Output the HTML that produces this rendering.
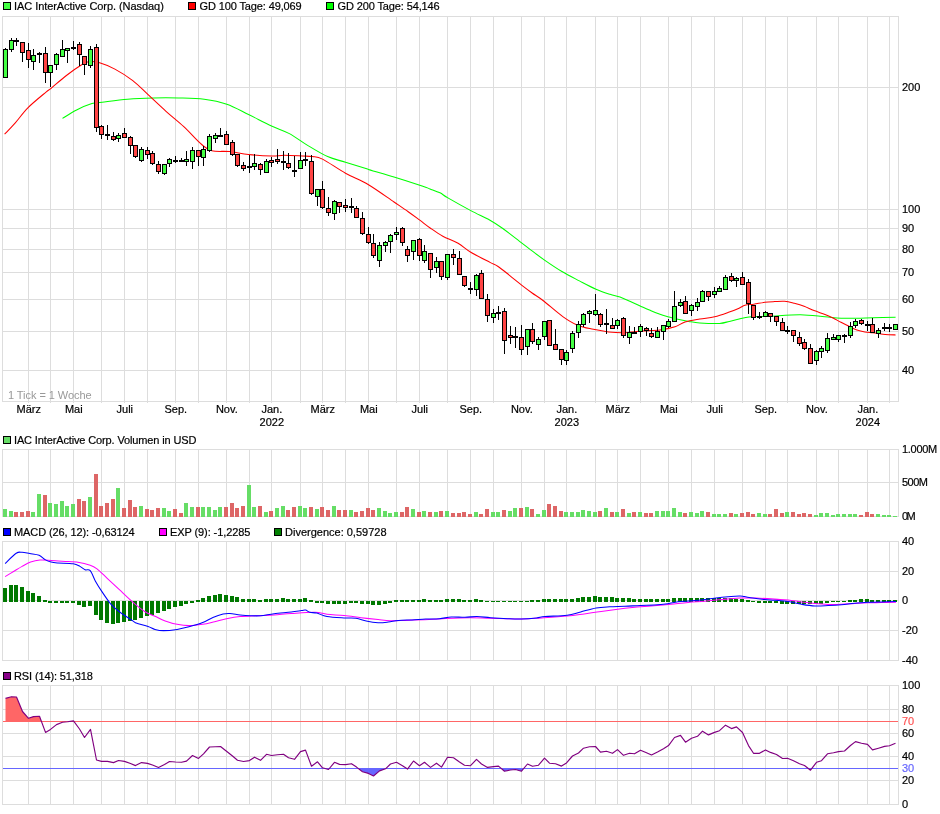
<!DOCTYPE html>
<html><head><meta charset="utf-8"><style>
html,body{margin:0;padding:0;background:#fff;width:940px;height:814px;overflow:hidden}
svg{display:block;will-change:transform}
text{font-family:"Liberation Sans",sans-serif;font-size:11px;stroke:currentColor;stroke-width:0.2px}
</style></head><body>
<svg width="940" height="814" viewBox="0 0 940 814" shape-rendering="crispEdges">
<rect x="28" y="16" width="1" height="387" fill="#dddddd"/>
<rect x="50" y="16" width="1" height="387" fill="#dddddd"/>
<rect x="73" y="16" width="1" height="387" fill="#dddddd"/>
<rect x="101" y="16" width="1" height="387" fill="#dddddd"/>
<rect x="124" y="16" width="1" height="387" fill="#dddddd"/>
<rect x="147" y="16" width="1" height="387" fill="#dddddd"/>
<rect x="175" y="16" width="1" height="387" fill="#dddddd"/>
<rect x="198" y="16" width="1" height="387" fill="#dddddd"/>
<rect x="226" y="16" width="1" height="387" fill="#dddddd"/>
<rect x="249" y="16" width="1" height="387" fill="#dddddd"/>
<rect x="271" y="16" width="1" height="387" fill="#dddddd"/>
<rect x="300" y="16" width="1" height="387" fill="#dddddd"/>
<rect x="322" y="16" width="1" height="387" fill="#dddddd"/>
<rect x="345" y="16" width="1" height="387" fill="#dddddd"/>
<rect x="368" y="16" width="1" height="387" fill="#dddddd"/>
<rect x="396" y="16" width="1" height="387" fill="#dddddd"/>
<rect x="419" y="16" width="1" height="387" fill="#dddddd"/>
<rect x="447" y="16" width="1" height="387" fill="#dddddd"/>
<rect x="470" y="16" width="1" height="387" fill="#dddddd"/>
<rect x="493" y="16" width="1" height="387" fill="#dddddd"/>
<rect x="521" y="16" width="1" height="387" fill="#dddddd"/>
<rect x="544" y="16" width="1" height="387" fill="#dddddd"/>
<rect x="566" y="16" width="1" height="387" fill="#dddddd"/>
<rect x="595" y="16" width="1" height="387" fill="#dddddd"/>
<rect x="617" y="16" width="1" height="387" fill="#dddddd"/>
<rect x="640" y="16" width="1" height="387" fill="#dddddd"/>
<rect x="668" y="16" width="1" height="387" fill="#dddddd"/>
<rect x="691" y="16" width="1" height="387" fill="#dddddd"/>
<rect x="714" y="16" width="1" height="387" fill="#dddddd"/>
<rect x="742" y="16" width="1" height="387" fill="#dddddd"/>
<rect x="765" y="16" width="1" height="387" fill="#dddddd"/>
<rect x="787" y="16" width="1" height="387" fill="#dddddd"/>
<rect x="816" y="16" width="1" height="387" fill="#dddddd"/>
<rect x="838" y="16" width="1" height="387" fill="#dddddd"/>
<rect x="867" y="16" width="1" height="387" fill="#dddddd"/>
<rect x="889" y="16" width="1" height="387" fill="#dddddd"/>
<rect x="2" y="87" width="897" height="1" fill="#dddddd"/>
<text x="902" y="91" text-anchor="start" fill="#000" style="color:#000">200</text>
<rect x="2" y="209" width="897" height="1" fill="#dddddd"/>
<text x="902" y="213" text-anchor="start" fill="#000" style="color:#000">100</text>
<rect x="2" y="228" width="897" height="1" fill="#dddddd"/>
<text x="902" y="232" text-anchor="start" fill="#000" style="color:#000">90</text>
<rect x="2" y="249" width="897" height="1" fill="#dddddd"/>
<text x="902" y="253" text-anchor="start" fill="#000" style="color:#000">80</text>
<rect x="2" y="272" width="897" height="1" fill="#dddddd"/>
<text x="902" y="276" text-anchor="start" fill="#000" style="color:#000">70</text>
<rect x="2" y="299" width="897" height="1" fill="#dddddd"/>
<text x="902" y="303" text-anchor="start" fill="#000" style="color:#000">60</text>
<rect x="2" y="331" width="897" height="1" fill="#dddddd"/>
<text x="902" y="335" text-anchor="start" fill="#000" style="color:#000">50</text>
<rect x="2" y="370" width="897" height="1" fill="#dddddd"/>
<text x="902" y="374" text-anchor="start" fill="#000" style="color:#000">40</text>
<rect x="2" y="16" width="897" height="1" fill="#dddddd"/>
<rect x="2" y="401" width="897" height="1" fill="#dddddd"/>
<rect x="2" y="16" width="1" height="386" fill="#dddddd"/>
<rect x="898" y="16" width="1" height="386" fill="#dddddd"/>
<rect x="3" y="2" width="8" height="8" fill="#000"/>
<rect x="4" y="3" width="6" height="6" fill="#44ff44"/>
<text x="14" y="10" text-anchor="start" fill="#000" style="color:#000" textLength="149.81" lengthAdjust="spacing">IAC InterActive Corp. (Nasdaq)</text>
<rect x="188" y="2" width="8" height="8" fill="#000"/>
<rect x="189" y="3" width="6" height="6" fill="#ff0000"/>
<text x="199.5" y="10" text-anchor="start" fill="#000" style="color:#000" textLength="102.19" lengthAdjust="spacing">GD 100 Tage: 49,069</text>
<rect x="326" y="2" width="8" height="8" fill="#000"/>
<rect x="327" y="3" width="6" height="6" fill="#00ff00"/>
<text x="337.5" y="10" text-anchor="start" fill="#000" style="color:#000" textLength="102.19" lengthAdjust="spacing">GD 200 Tage: 54,146</text>
<text x="28.8" y="413" text-anchor="middle" fill="#000" style="color:#000">März</text>
<text x="73.8" y="413" text-anchor="middle" fill="#000" style="color:#000">Mai</text>
<text x="124.8" y="413" text-anchor="middle" fill="#000" style="color:#000">Juli</text>
<text x="175.8" y="413" text-anchor="middle" fill="#000" style="color:#000">Sep.</text>
<text x="226.8" y="413" text-anchor="middle" fill="#000" style="color:#000">Nov.</text>
<text x="271.8" y="413" text-anchor="middle" fill="#000" style="color:#000">Jan.</text>
<text x="271.8" y="426" text-anchor="middle" fill="#000" style="color:#000">2022</text>
<text x="322.8" y="413" text-anchor="middle" fill="#000" style="color:#000">März</text>
<text x="368.8" y="413" text-anchor="middle" fill="#000" style="color:#000">Mai</text>
<text x="419.8" y="413" text-anchor="middle" fill="#000" style="color:#000">Juli</text>
<text x="470.8" y="413" text-anchor="middle" fill="#000" style="color:#000">Sep.</text>
<text x="521.8" y="413" text-anchor="middle" fill="#000" style="color:#000">Nov.</text>
<text x="566.8" y="413" text-anchor="middle" fill="#000" style="color:#000">Jan.</text>
<text x="566.8" y="426" text-anchor="middle" fill="#000" style="color:#000">2023</text>
<text x="617.8" y="413" text-anchor="middle" fill="#000" style="color:#000">März</text>
<text x="668.8" y="413" text-anchor="middle" fill="#000" style="color:#000">Mai</text>
<text x="714.8" y="413" text-anchor="middle" fill="#000" style="color:#000">Juli</text>
<text x="765.8" y="413" text-anchor="middle" fill="#000" style="color:#000">Sep.</text>
<text x="816.8" y="413" text-anchor="middle" fill="#000" style="color:#000">Nov.</text>
<text x="867.8" y="413" text-anchor="middle" fill="#000" style="color:#000">Jan.</text>
<text x="867.8" y="426" text-anchor="middle" fill="#000" style="color:#000">2024</text>
<text x="8" y="399" text-anchor="start" fill="#999999" style="color:#999999;stroke-width:0px" textLength="83.68" lengthAdjust="spacing">1 Tick = 1 Woche</text>
<path d="M62.50,118.40 C64.85,117.00 71.70,112.47 76.60,110.00 C81.50,107.53 87.65,104.88 91.90,103.60 C96.15,102.32 96.15,103.02 102.10,102.30 C108.05,101.58 119.08,100.02 127.60,99.30 C136.12,98.58 144.68,98.22 153.20,98.00 C161.72,97.78 170.20,97.78 178.70,98.00 C187.20,98.22 196.18,98.25 204.20,99.30 C212.22,100.35 219.42,101.77 226.80,104.30 C234.18,106.83 241.05,110.88 248.50,114.50 C255.95,118.12 264.68,122.82 271.50,126.00 C278.32,129.18 283.45,130.42 289.40,133.60 C295.35,136.78 300.83,141.27 307.20,145.10 C313.57,148.93 321.22,153.75 327.60,156.60 C333.98,159.45 338.68,160.07 345.50,162.20 C352.32,164.33 360.42,166.93 368.50,169.40 C376.58,171.87 385.07,174.23 394.00,177.00 C402.93,179.77 416.10,184.02 422.10,186.00 C428.10,187.98 427.02,187.77 430.00,188.90 C432.98,190.03 437.02,191.30 440.00,192.80 C442.98,194.30 442.77,194.93 447.90,197.90 C453.03,200.87 463.78,206.88 470.80,210.60 C477.82,214.32 484.67,217.22 490.00,220.20 C495.33,223.18 497.48,224.67 502.80,228.50 C508.12,232.33 517.02,239.47 521.90,243.20 C526.78,246.93 528.27,248.03 532.10,250.90 C535.93,253.77 540.00,257.00 544.90,260.40 C549.80,263.80 555.75,267.88 561.50,271.30 C567.25,274.72 573.65,277.92 579.40,280.90 C585.15,283.88 590.90,286.97 596.00,289.20 C601.10,291.43 606.00,292.98 610.00,294.30 C614.00,295.62 616.70,295.93 620.00,297.10 C623.30,298.27 626.52,299.87 629.80,301.30 C633.08,302.73 636.42,304.23 639.70,305.70 C642.98,307.17 646.23,308.70 649.50,310.10 C652.77,311.50 656.03,312.95 659.30,314.10 C662.57,315.25 665.82,316.10 669.10,317.00 C672.38,317.90 675.72,318.77 679.00,319.50 C682.28,320.23 685.33,320.83 688.80,321.40 C692.27,321.97 694.68,322.57 699.80,322.90 C704.92,323.23 714.58,323.65 719.50,323.40 C724.42,323.15 726.03,322.13 729.30,321.40 C732.57,320.67 735.82,319.73 739.10,319.00 C742.38,318.27 745.72,317.42 749.00,317.00 C752.28,316.58 755.30,316.63 758.80,316.50 C762.30,316.37 763.07,316.50 770.00,316.20 C776.93,315.90 791.23,314.60 800.40,314.70 C809.57,314.80 818.23,316.22 825.00,316.80 C831.77,317.38 835.68,317.97 841.00,318.20 C846.32,318.43 851.58,318.28 856.90,318.20 C862.22,318.12 866.45,317.87 872.90,317.70 C879.35,317.53 891.82,317.28 895.60,317.20" fill="none" stroke="#00ff00" stroke-width="1.05" shape-rendering="geometricPrecision"/>
<path d="M4.60,134.20 C6.38,132.30 11.38,127.23 15.30,122.80 C19.22,118.37 22.98,112.72 28.10,107.60 C33.22,102.48 42.17,95.32 46.00,92.10 C49.83,88.88 47.70,91.07 51.10,88.30 C54.50,85.53 61.30,79.42 66.40,75.50 C71.50,71.58 77.87,67.13 81.70,64.80 C85.53,62.47 86.42,61.83 89.40,61.50 C92.38,61.17 95.35,61.53 99.60,62.80 C103.85,64.07 109.37,66.13 114.90,69.10 C120.43,72.07 127.27,76.33 132.80,80.60 C138.33,84.87 142.57,89.58 148.10,94.70 C153.63,99.82 160.05,105.98 166.00,111.30 C171.95,116.62 177.85,121.07 183.80,126.60 C189.75,132.13 197.02,140.47 201.70,144.50 C206.38,148.53 207.22,149.62 211.90,150.80 C216.58,151.98 223.70,150.98 229.80,151.60 C235.90,152.22 241.55,153.77 248.50,154.50 C255.45,155.23 265.55,155.87 271.50,156.00 C277.45,156.13 279.10,155.30 284.20,155.30 C289.30,155.30 297.42,155.78 302.10,156.00 C306.78,156.22 308.90,156.08 312.30,156.60 C315.70,157.12 316.97,156.33 322.50,159.10 C328.03,161.87 337.83,168.93 345.50,173.20 C353.17,177.47 360.42,179.90 368.50,184.70 C376.58,189.50 387.38,197.50 394.00,202.00 C400.62,206.50 403.90,208.67 408.20,211.70 C412.50,214.73 416.08,217.45 419.80,220.20 C423.52,222.95 426.67,225.53 430.50,228.20 C434.33,230.87 438.20,233.68 442.80,236.20 C447.40,238.72 453.43,240.63 458.10,243.30 C462.77,245.97 465.48,249.02 470.80,252.20 C476.12,255.38 485.52,260.07 490.00,262.40 C494.48,264.73 494.50,264.08 497.70,266.20 C500.90,268.32 505.17,271.90 509.20,275.10 C513.23,278.30 518.08,282.42 521.90,285.40 C525.72,288.38 528.58,290.48 532.10,293.00 C535.62,295.52 537.88,296.57 543.00,300.50 C548.12,304.43 556.95,312.43 562.80,316.60 C568.65,320.77 573.00,323.38 578.10,325.50 C583.20,327.62 588.30,328.23 593.40,329.30 C598.50,330.37 603.60,331.33 608.70,331.90 C613.80,332.47 618.47,332.85 624.00,332.70 C629.53,332.55 635.90,331.45 641.90,331.00 C647.90,330.55 654.48,330.70 660.00,330.00 C665.52,329.30 670.83,328.13 675.00,326.80 C679.17,325.47 680.87,323.30 685.00,322.00 C689.13,320.70 694.87,319.87 699.80,319.00 C704.73,318.13 709.68,317.95 714.60,316.80 C719.52,315.65 725.22,313.53 729.30,312.10 C733.38,310.67 736.48,309.35 739.10,308.20 C741.72,307.05 742.53,305.87 745.00,305.20 C747.47,304.53 750.60,304.68 753.90,304.20 C757.20,303.72 761.33,302.73 764.80,302.30 C768.27,301.87 771.42,301.77 774.70,301.60 C777.98,301.43 781.23,301.02 784.50,301.30 C787.77,301.58 791.03,302.48 794.30,303.30 C797.57,304.12 800.82,304.98 804.10,306.20 C807.38,307.42 810.52,309.23 814.00,310.60 C817.48,311.97 821.83,313.17 825.00,314.40 C828.17,315.63 830.33,316.68 833.00,318.00 C835.67,319.32 838.33,320.92 841.00,322.30 C843.67,323.68 846.35,325.03 849.00,326.30 C851.65,327.57 854.25,328.97 856.90,329.90 C859.55,330.83 862.23,331.43 864.90,331.90 C867.57,332.37 870.23,332.37 872.90,332.70 C875.57,333.03 878.25,333.57 880.90,333.90 C883.55,334.23 886.35,334.53 888.80,334.70 C891.25,334.87 894.47,334.87 895.60,334.90" fill="none" stroke="#ff0000" stroke-width="1.05" shape-rendering="geometricPrecision"/>
<rect x="5" y="48" width="1" height="1" fill="#000"/>
<rect x="3" y="49" width="5" height="29" fill="#000"/>
<rect x="4" y="50" width="3" height="27" fill="#44ff44"/>
<rect x="11" y="38" width="1" height="2" fill="#000"/>
<rect x="11" y="50" width="1" height="2" fill="#000"/>
<rect x="9" y="40" width="5" height="10" fill="#000"/>
<rect x="10" y="41" width="3" height="8" fill="#44ff44"/>
<rect x="16" y="38" width="1" height="2" fill="#000"/>
<rect x="16" y="42" width="1" height="4" fill="#000"/>
<rect x="14" y="40" width="5" height="2" fill="#000"/>
<rect x="22" y="53" width="1" height="9" fill="#000"/>
<rect x="20" y="42" width="5" height="11" fill="#000"/>
<rect x="21" y="43" width="3" height="9" fill="#ff4444"/>
<rect x="28" y="43" width="1" height="7" fill="#000"/>
<rect x="28" y="60" width="1" height="8" fill="#000"/>
<rect x="26" y="50" width="5" height="10" fill="#000"/>
<rect x="27" y="51" width="3" height="8" fill="#ff4444"/>
<rect x="33" y="49" width="1" height="6" fill="#000"/>
<rect x="33" y="62" width="1" height="8" fill="#000"/>
<rect x="31" y="55" width="5" height="7" fill="#000"/>
<rect x="32" y="56" width="3" height="5" fill="#44ff44"/>
<rect x="39" y="52" width="1" height="1" fill="#000"/>
<rect x="39" y="55" width="1" height="8" fill="#000"/>
<rect x="37" y="53" width="5" height="2" fill="#000"/>
<rect x="45" y="47" width="1" height="6" fill="#000"/>
<rect x="45" y="73" width="1" height="10" fill="#000"/>
<rect x="43" y="53" width="5" height="20" fill="#000"/>
<rect x="44" y="54" width="3" height="18" fill="#ff4444"/>
<rect x="50" y="73" width="1" height="14" fill="#000"/>
<rect x="48" y="65" width="5" height="8" fill="#000"/>
<rect x="49" y="66" width="3" height="6" fill="#44ff44"/>
<rect x="56" y="53" width="1" height="1" fill="#000"/>
<rect x="56" y="65" width="1" height="5" fill="#000"/>
<rect x="54" y="54" width="5" height="11" fill="#000"/>
<rect x="55" y="55" width="3" height="9" fill="#44ff44"/>
<rect x="62" y="40" width="1" height="9" fill="#000"/>
<rect x="60" y="49" width="5" height="8" fill="#000"/>
<rect x="61" y="50" width="3" height="6" fill="#44ff44"/>
<rect x="67" y="51" width="1" height="12" fill="#000"/>
<rect x="65" y="48" width="5" height="3" fill="#000"/>
<rect x="66" y="49" width="3" height="1" fill="#44ff44"/>
<rect x="73" y="41" width="1" height="6" fill="#000"/>
<rect x="73" y="49" width="1" height="1" fill="#000"/>
<rect x="71" y="47" width="5" height="2" fill="#000"/>
<rect x="79" y="42" width="1" height="2" fill="#000"/>
<rect x="79" y="55" width="1" height="11" fill="#000"/>
<rect x="77" y="44" width="5" height="11" fill="#000"/>
<rect x="78" y="45" width="3" height="9" fill="#ff4444"/>
<rect x="84" y="65" width="1" height="10" fill="#000"/>
<rect x="82" y="56" width="5" height="9" fill="#000"/>
<rect x="83" y="57" width="3" height="7" fill="#ff4444"/>
<rect x="90" y="46" width="1" height="3" fill="#000"/>
<rect x="90" y="66" width="1" height="2" fill="#000"/>
<rect x="88" y="49" width="5" height="17" fill="#000"/>
<rect x="89" y="50" width="3" height="15" fill="#44ff44"/>
<rect x="96" y="44" width="1" height="3" fill="#000"/>
<rect x="96" y="128" width="1" height="4" fill="#000"/>
<rect x="94" y="47" width="5" height="81" fill="#000"/>
<rect x="95" y="48" width="3" height="79" fill="#ff4444"/>
<rect x="101" y="125" width="1" height="1" fill="#000"/>
<rect x="101" y="135" width="1" height="4" fill="#000"/>
<rect x="99" y="126" width="5" height="9" fill="#000"/>
<rect x="100" y="127" width="3" height="7" fill="#ff4444"/>
<rect x="107" y="125" width="1" height="9" fill="#000"/>
<rect x="107" y="136" width="1" height="4" fill="#000"/>
<rect x="105" y="134" width="5" height="2" fill="#000"/>
<rect x="113" y="132" width="1" height="4" fill="#000"/>
<rect x="113" y="140" width="1" height="1" fill="#000"/>
<rect x="111" y="136" width="5" height="4" fill="#000"/>
<rect x="112" y="137" width="3" height="2" fill="#ff4444"/>
<rect x="118" y="133" width="1" height="2" fill="#000"/>
<rect x="118" y="139" width="1" height="3" fill="#000"/>
<rect x="116" y="135" width="5" height="4" fill="#000"/>
<rect x="117" y="136" width="3" height="2" fill="#44ff44"/>
<rect x="124" y="128" width="1" height="5" fill="#000"/>
<rect x="122" y="133" width="5" height="5" fill="#000"/>
<rect x="123" y="134" width="3" height="3" fill="#ff4444"/>
<rect x="130" y="136" width="1" height="1" fill="#000"/>
<rect x="130" y="146" width="1" height="8" fill="#000"/>
<rect x="128" y="137" width="5" height="9" fill="#000"/>
<rect x="129" y="138" width="3" height="7" fill="#ff4444"/>
<rect x="135" y="157" width="1" height="1" fill="#000"/>
<rect x="133" y="145" width="5" height="12" fill="#000"/>
<rect x="134" y="146" width="3" height="10" fill="#ff4444"/>
<rect x="141" y="147" width="1" height="2" fill="#000"/>
<rect x="141" y="161" width="1" height="1" fill="#000"/>
<rect x="139" y="149" width="5" height="12" fill="#000"/>
<rect x="140" y="150" width="3" height="10" fill="#44ff44"/>
<rect x="147" y="147" width="1" height="3" fill="#000"/>
<rect x="147" y="155" width="1" height="4" fill="#000"/>
<rect x="145" y="150" width="5" height="5" fill="#000"/>
<rect x="146" y="151" width="3" height="3" fill="#ff4444"/>
<rect x="152" y="151" width="1" height="2" fill="#000"/>
<rect x="152" y="164" width="1" height="1" fill="#000"/>
<rect x="150" y="153" width="5" height="11" fill="#000"/>
<rect x="151" y="154" width="3" height="9" fill="#ff4444"/>
<rect x="158" y="161" width="1" height="3" fill="#000"/>
<rect x="158" y="172" width="1" height="2" fill="#000"/>
<rect x="156" y="164" width="5" height="8" fill="#000"/>
<rect x="157" y="165" width="3" height="6" fill="#ff4444"/>
<rect x="164" y="174" width="1" height="1" fill="#000"/>
<rect x="162" y="164" width="5" height="10" fill="#000"/>
<rect x="163" y="165" width="3" height="8" fill="#44ff44"/>
<rect x="169" y="158" width="1" height="1" fill="#000"/>
<rect x="169" y="164" width="1" height="3" fill="#000"/>
<rect x="167" y="159" width="5" height="5" fill="#000"/>
<rect x="168" y="160" width="3" height="3" fill="#44ff44"/>
<rect x="175" y="156" width="1" height="4" fill="#000"/>
<rect x="175" y="162" width="1" height="1" fill="#000"/>
<rect x="173" y="160" width="5" height="2" fill="#000"/>
<rect x="181" y="158" width="1" height="2" fill="#000"/>
<rect x="179" y="160" width="5" height="2" fill="#000"/>
<rect x="186" y="151" width="1" height="8" fill="#000"/>
<rect x="186" y="162" width="1" height="4" fill="#000"/>
<rect x="184" y="159" width="5" height="3" fill="#000"/>
<rect x="185" y="160" width="3" height="1" fill="#44ff44"/>
<rect x="192" y="147" width="1" height="3" fill="#000"/>
<rect x="192" y="162" width="1" height="7" fill="#000"/>
<rect x="190" y="150" width="5" height="12" fill="#000"/>
<rect x="191" y="151" width="3" height="10" fill="#44ff44"/>
<rect x="198" y="157" width="1" height="9" fill="#000"/>
<rect x="196" y="150" width="5" height="7" fill="#000"/>
<rect x="197" y="151" width="3" height="5" fill="#ff4444"/>
<rect x="203" y="146" width="1" height="3" fill="#000"/>
<rect x="203" y="158" width="1" height="8" fill="#000"/>
<rect x="201" y="149" width="5" height="9" fill="#000"/>
<rect x="202" y="150" width="3" height="7" fill="#44ff44"/>
<rect x="209" y="134" width="1" height="2" fill="#000"/>
<rect x="209" y="151" width="1" height="1" fill="#000"/>
<rect x="207" y="136" width="5" height="15" fill="#000"/>
<rect x="208" y="137" width="3" height="13" fill="#44ff44"/>
<rect x="215" y="133" width="1" height="2" fill="#000"/>
<rect x="215" y="139" width="1" height="4" fill="#000"/>
<rect x="213" y="135" width="5" height="4" fill="#000"/>
<rect x="214" y="136" width="3" height="2" fill="#44ff44"/>
<rect x="220" y="128" width="1" height="7" fill="#000"/>
<rect x="218" y="135" width="5" height="2" fill="#000"/>
<rect x="226" y="131" width="1" height="3" fill="#000"/>
<rect x="224" y="134" width="5" height="11" fill="#000"/>
<rect x="225" y="135" width="3" height="9" fill="#ff4444"/>
<rect x="232" y="140" width="1" height="2" fill="#000"/>
<rect x="232" y="155" width="1" height="1" fill="#000"/>
<rect x="230" y="142" width="5" height="13" fill="#000"/>
<rect x="231" y="143" width="3" height="11" fill="#ff4444"/>
<rect x="237" y="166" width="1" height="1" fill="#000"/>
<rect x="235" y="154" width="5" height="12" fill="#000"/>
<rect x="236" y="155" width="3" height="10" fill="#ff4444"/>
<rect x="243" y="162" width="1" height="3" fill="#000"/>
<rect x="243" y="169" width="1" height="2" fill="#000"/>
<rect x="241" y="165" width="5" height="4" fill="#000"/>
<rect x="242" y="166" width="3" height="2" fill="#ff4444"/>
<rect x="249" y="155" width="1" height="11" fill="#000"/>
<rect x="249" y="168" width="1" height="5" fill="#000"/>
<rect x="247" y="166" width="5" height="2" fill="#000"/>
<rect x="254" y="154" width="1" height="9" fill="#000"/>
<rect x="254" y="167" width="1" height="3" fill="#000"/>
<rect x="252" y="163" width="5" height="4" fill="#000"/>
<rect x="253" y="164" width="3" height="2" fill="#44ff44"/>
<rect x="260" y="163" width="1" height="1" fill="#000"/>
<rect x="260" y="170" width="1" height="5" fill="#000"/>
<rect x="258" y="164" width="5" height="6" fill="#000"/>
<rect x="259" y="165" width="3" height="4" fill="#ff4444"/>
<rect x="266" y="159" width="1" height="2" fill="#000"/>
<rect x="264" y="161" width="5" height="12" fill="#000"/>
<rect x="265" y="162" width="3" height="10" fill="#44ff44"/>
<rect x="271" y="157" width="1" height="3" fill="#000"/>
<rect x="271" y="163" width="1" height="4" fill="#000"/>
<rect x="269" y="160" width="5" height="3" fill="#000"/>
<rect x="270" y="161" width="3" height="1" fill="#ff4444"/>
<rect x="277" y="149" width="1" height="10" fill="#000"/>
<rect x="277" y="162" width="1" height="2" fill="#000"/>
<rect x="275" y="159" width="5" height="3" fill="#000"/>
<rect x="276" y="160" width="3" height="1" fill="#ff4444"/>
<rect x="283" y="151" width="1" height="10" fill="#000"/>
<rect x="283" y="163" width="1" height="7" fill="#000"/>
<rect x="281" y="161" width="5" height="2" fill="#000"/>
<rect x="288" y="153" width="1" height="10" fill="#000"/>
<rect x="288" y="168" width="1" height="1" fill="#000"/>
<rect x="286" y="163" width="5" height="5" fill="#000"/>
<rect x="287" y="164" width="3" height="3" fill="#ff4444"/>
<rect x="294" y="156" width="1" height="14" fill="#000"/>
<rect x="294" y="172" width="1" height="5" fill="#000"/>
<rect x="292" y="170" width="5" height="2" fill="#000"/>
<rect x="300" y="152" width="1" height="8" fill="#000"/>
<rect x="298" y="160" width="5" height="9" fill="#000"/>
<rect x="299" y="161" width="3" height="7" fill="#44ff44"/>
<rect x="305" y="152" width="1" height="7" fill="#000"/>
<rect x="305" y="161" width="1" height="5" fill="#000"/>
<rect x="303" y="159" width="5" height="2" fill="#000"/>
<rect x="311" y="155" width="1" height="6" fill="#000"/>
<rect x="311" y="194" width="1" height="1" fill="#000"/>
<rect x="309" y="161" width="5" height="33" fill="#000"/>
<rect x="310" y="162" width="3" height="31" fill="#ff4444"/>
<rect x="317" y="197" width="1" height="9" fill="#000"/>
<rect x="315" y="189" width="5" height="8" fill="#000"/>
<rect x="316" y="190" width="3" height="6" fill="#44ff44"/>
<rect x="322" y="181" width="1" height="8" fill="#000"/>
<rect x="322" y="208" width="1" height="1" fill="#000"/>
<rect x="320" y="189" width="5" height="19" fill="#000"/>
<rect x="321" y="190" width="3" height="17" fill="#ff4444"/>
<rect x="328" y="197" width="1" height="11" fill="#000"/>
<rect x="328" y="213" width="1" height="3" fill="#000"/>
<rect x="326" y="208" width="5" height="5" fill="#000"/>
<rect x="327" y="209" width="3" height="3" fill="#ff4444"/>
<rect x="334" y="200" width="1" height="1" fill="#000"/>
<rect x="334" y="214" width="1" height="6" fill="#000"/>
<rect x="332" y="201" width="5" height="13" fill="#000"/>
<rect x="333" y="202" width="3" height="11" fill="#44ff44"/>
<rect x="339" y="207" width="1" height="6" fill="#000"/>
<rect x="337" y="202" width="5" height="5" fill="#000"/>
<rect x="338" y="203" width="3" height="3" fill="#ff4444"/>
<rect x="345" y="199" width="1" height="6" fill="#000"/>
<rect x="345" y="208" width="1" height="4" fill="#000"/>
<rect x="343" y="205" width="5" height="3" fill="#000"/>
<rect x="344" y="206" width="3" height="1" fill="#ff4444"/>
<rect x="351" y="198" width="1" height="8" fill="#000"/>
<rect x="351" y="208" width="1" height="5" fill="#000"/>
<rect x="349" y="206" width="5" height="2" fill="#000"/>
<rect x="356" y="206" width="1" height="2" fill="#000"/>
<rect x="354" y="208" width="5" height="10" fill="#000"/>
<rect x="355" y="209" width="3" height="8" fill="#ff4444"/>
<rect x="362" y="212" width="1" height="6" fill="#000"/>
<rect x="362" y="234" width="1" height="1" fill="#000"/>
<rect x="360" y="218" width="5" height="16" fill="#000"/>
<rect x="361" y="219" width="3" height="14" fill="#ff4444"/>
<rect x="368" y="227" width="1" height="7" fill="#000"/>
<rect x="368" y="243" width="1" height="1" fill="#000"/>
<rect x="366" y="234" width="5" height="9" fill="#000"/>
<rect x="367" y="235" width="3" height="7" fill="#ff4444"/>
<rect x="373" y="234" width="1" height="9" fill="#000"/>
<rect x="373" y="256" width="1" height="2" fill="#000"/>
<rect x="371" y="243" width="5" height="13" fill="#000"/>
<rect x="372" y="244" width="3" height="11" fill="#ff4444"/>
<rect x="379" y="242" width="1" height="3" fill="#000"/>
<rect x="379" y="261" width="1" height="6" fill="#000"/>
<rect x="377" y="245" width="5" height="16" fill="#000"/>
<rect x="378" y="246" width="3" height="14" fill="#44ff44"/>
<rect x="385" y="241" width="1" height="1" fill="#000"/>
<rect x="385" y="246" width="1" height="6" fill="#000"/>
<rect x="383" y="242" width="5" height="4" fill="#000"/>
<rect x="384" y="243" width="3" height="2" fill="#44ff44"/>
<rect x="390" y="234" width="1" height="1" fill="#000"/>
<rect x="390" y="242" width="1" height="11" fill="#000"/>
<rect x="388" y="235" width="5" height="7" fill="#000"/>
<rect x="389" y="236" width="3" height="5" fill="#44ff44"/>
<rect x="396" y="227" width="1" height="5" fill="#000"/>
<rect x="396" y="235" width="1" height="5" fill="#000"/>
<rect x="394" y="232" width="5" height="3" fill="#000"/>
<rect x="395" y="233" width="3" height="1" fill="#44ff44"/>
<rect x="402" y="227" width="1" height="1" fill="#000"/>
<rect x="402" y="243" width="1" height="3" fill="#000"/>
<rect x="400" y="228" width="5" height="15" fill="#000"/>
<rect x="401" y="229" width="3" height="13" fill="#ff4444"/>
<rect x="407" y="246" width="1" height="3" fill="#000"/>
<rect x="407" y="256" width="1" height="6" fill="#000"/>
<rect x="405" y="249" width="5" height="7" fill="#000"/>
<rect x="406" y="250" width="3" height="5" fill="#ff4444"/>
<rect x="413" y="252" width="1" height="8" fill="#000"/>
<rect x="411" y="240" width="5" height="12" fill="#000"/>
<rect x="412" y="241" width="3" height="10" fill="#44ff44"/>
<rect x="419" y="238" width="1" height="1" fill="#000"/>
<rect x="419" y="256" width="1" height="5" fill="#000"/>
<rect x="417" y="239" width="5" height="17" fill="#000"/>
<rect x="418" y="240" width="3" height="15" fill="#ff4444"/>
<rect x="424" y="245" width="1" height="6" fill="#000"/>
<rect x="424" y="261" width="1" height="2" fill="#000"/>
<rect x="422" y="251" width="5" height="10" fill="#000"/>
<rect x="423" y="252" width="3" height="8" fill="#44ff44"/>
<rect x="430" y="270" width="1" height="8" fill="#000"/>
<rect x="428" y="253" width="5" height="17" fill="#000"/>
<rect x="429" y="254" width="3" height="15" fill="#ff4444"/>
<rect x="436" y="257" width="1" height="4" fill="#000"/>
<rect x="436" y="268" width="1" height="5" fill="#000"/>
<rect x="434" y="261" width="5" height="7" fill="#000"/>
<rect x="435" y="262" width="3" height="5" fill="#44ff44"/>
<rect x="441" y="277" width="1" height="3" fill="#000"/>
<rect x="439" y="261" width="5" height="16" fill="#000"/>
<rect x="440" y="262" width="3" height="14" fill="#ff4444"/>
<rect x="447" y="278" width="1" height="2" fill="#000"/>
<rect x="445" y="254" width="5" height="24" fill="#000"/>
<rect x="446" y="255" width="3" height="22" fill="#44ff44"/>
<rect x="453" y="249" width="1" height="5" fill="#000"/>
<rect x="453" y="258" width="1" height="7" fill="#000"/>
<rect x="451" y="254" width="5" height="4" fill="#000"/>
<rect x="452" y="255" width="3" height="2" fill="#ff4444"/>
<rect x="459" y="251" width="1" height="7" fill="#000"/>
<rect x="457" y="258" width="5" height="17" fill="#000"/>
<rect x="458" y="259" width="3" height="15" fill="#ff4444"/>
<rect x="464" y="286" width="1" height="1" fill="#000"/>
<rect x="462" y="276" width="5" height="10" fill="#000"/>
<rect x="463" y="277" width="3" height="8" fill="#ff4444"/>
<rect x="470" y="282" width="1" height="6" fill="#000"/>
<rect x="470" y="290" width="1" height="4" fill="#000"/>
<rect x="468" y="288" width="5" height="2" fill="#000"/>
<rect x="476" y="274" width="1" height="1" fill="#000"/>
<rect x="476" y="290" width="1" height="6" fill="#000"/>
<rect x="474" y="275" width="5" height="15" fill="#000"/>
<rect x="475" y="276" width="3" height="13" fill="#44ff44"/>
<rect x="481" y="270" width="1" height="3" fill="#000"/>
<rect x="479" y="273" width="5" height="26" fill="#000"/>
<rect x="480" y="274" width="3" height="24" fill="#ff4444"/>
<rect x="487" y="294" width="1" height="5" fill="#000"/>
<rect x="487" y="316" width="1" height="6" fill="#000"/>
<rect x="485" y="299" width="5" height="17" fill="#000"/>
<rect x="486" y="300" width="3" height="15" fill="#ff4444"/>
<rect x="493" y="309" width="1" height="4" fill="#000"/>
<rect x="493" y="318" width="1" height="5" fill="#000"/>
<rect x="491" y="313" width="5" height="5" fill="#000"/>
<rect x="492" y="314" width="3" height="3" fill="#44ff44"/>
<rect x="498" y="306" width="1" height="6" fill="#000"/>
<rect x="498" y="314" width="1" height="6" fill="#000"/>
<rect x="496" y="312" width="5" height="2" fill="#000"/>
<rect x="504" y="308" width="1" height="3" fill="#000"/>
<rect x="504" y="341" width="1" height="13" fill="#000"/>
<rect x="502" y="311" width="5" height="30" fill="#000"/>
<rect x="503" y="312" width="3" height="28" fill="#ff4444"/>
<rect x="510" y="326" width="1" height="9" fill="#000"/>
<rect x="510" y="338" width="1" height="6" fill="#000"/>
<rect x="508" y="335" width="5" height="3" fill="#000"/>
<rect x="509" y="336" width="3" height="1" fill="#ff4444"/>
<rect x="515" y="327" width="1" height="9" fill="#000"/>
<rect x="515" y="338" width="1" height="10" fill="#000"/>
<rect x="513" y="336" width="5" height="2" fill="#000"/>
<rect x="521" y="325" width="1" height="12" fill="#000"/>
<rect x="521" y="350" width="1" height="5" fill="#000"/>
<rect x="519" y="337" width="5" height="13" fill="#000"/>
<rect x="520" y="338" width="3" height="11" fill="#ff4444"/>
<rect x="527" y="347" width="1" height="8" fill="#000"/>
<rect x="525" y="329" width="5" height="18" fill="#000"/>
<rect x="526" y="330" width="3" height="16" fill="#44ff44"/>
<rect x="532" y="323" width="1" height="6" fill="#000"/>
<rect x="532" y="342" width="1" height="2" fill="#000"/>
<rect x="530" y="329" width="5" height="13" fill="#000"/>
<rect x="531" y="330" width="3" height="11" fill="#ff4444"/>
<rect x="538" y="337" width="1" height="2" fill="#000"/>
<rect x="538" y="345" width="1" height="5" fill="#000"/>
<rect x="536" y="339" width="5" height="6" fill="#000"/>
<rect x="537" y="340" width="3" height="4" fill="#44ff44"/>
<rect x="544" y="337" width="1" height="3" fill="#000"/>
<rect x="542" y="321" width="5" height="16" fill="#000"/>
<rect x="543" y="322" width="3" height="14" fill="#44ff44"/>
<rect x="547" y="320" width="5" height="26" fill="#000"/>
<rect x="548" y="321" width="3" height="24" fill="#ff4444"/>
<rect x="555" y="329" width="1" height="15" fill="#000"/>
<rect x="553" y="344" width="5" height="6" fill="#000"/>
<rect x="554" y="345" width="3" height="4" fill="#ff4444"/>
<rect x="561" y="360" width="1" height="5" fill="#000"/>
<rect x="559" y="349" width="5" height="11" fill="#000"/>
<rect x="560" y="350" width="3" height="9" fill="#ff4444"/>
<rect x="566" y="350" width="1" height="2" fill="#000"/>
<rect x="566" y="361" width="1" height="4" fill="#000"/>
<rect x="564" y="352" width="5" height="9" fill="#000"/>
<rect x="565" y="353" width="3" height="7" fill="#44ff44"/>
<rect x="572" y="331" width="1" height="2" fill="#000"/>
<rect x="572" y="349" width="1" height="4" fill="#000"/>
<rect x="570" y="333" width="5" height="16" fill="#000"/>
<rect x="571" y="334" width="3" height="14" fill="#44ff44"/>
<rect x="578" y="321" width="1" height="3" fill="#000"/>
<rect x="578" y="333" width="1" height="5" fill="#000"/>
<rect x="576" y="324" width="5" height="9" fill="#000"/>
<rect x="577" y="325" width="3" height="7" fill="#44ff44"/>
<rect x="583" y="313" width="1" height="1" fill="#000"/>
<rect x="583" y="325" width="1" height="2" fill="#000"/>
<rect x="581" y="314" width="5" height="11" fill="#000"/>
<rect x="582" y="315" width="3" height="9" fill="#44ff44"/>
<rect x="589" y="310" width="1" height="1" fill="#000"/>
<rect x="589" y="314" width="1" height="9" fill="#000"/>
<rect x="587" y="311" width="5" height="3" fill="#000"/>
<rect x="588" y="312" width="3" height="1" fill="#44ff44"/>
<rect x="595" y="294" width="1" height="16" fill="#000"/>
<rect x="595" y="315" width="1" height="1" fill="#000"/>
<rect x="593" y="310" width="5" height="5" fill="#000"/>
<rect x="594" y="311" width="3" height="3" fill="#44ff44"/>
<rect x="600" y="313" width="1" height="1" fill="#000"/>
<rect x="600" y="325" width="1" height="2" fill="#000"/>
<rect x="598" y="314" width="5" height="11" fill="#000"/>
<rect x="599" y="315" width="3" height="9" fill="#ff4444"/>
<rect x="606" y="309" width="1" height="14" fill="#000"/>
<rect x="606" y="325" width="1" height="9" fill="#000"/>
<rect x="604" y="323" width="5" height="2" fill="#000"/>
<rect x="612" y="318" width="1" height="7" fill="#000"/>
<rect x="610" y="325" width="5" height="4" fill="#000"/>
<rect x="611" y="326" width="3" height="2" fill="#ff4444"/>
<rect x="617" y="319" width="1" height="1" fill="#000"/>
<rect x="617" y="326" width="1" height="3" fill="#000"/>
<rect x="615" y="320" width="5" height="6" fill="#000"/>
<rect x="616" y="321" width="3" height="4" fill="#44ff44"/>
<rect x="623" y="317" width="1" height="1" fill="#000"/>
<rect x="623" y="336" width="1" height="2" fill="#000"/>
<rect x="621" y="318" width="5" height="18" fill="#000"/>
<rect x="622" y="319" width="3" height="16" fill="#ff4444"/>
<rect x="629" y="326" width="1" height="6" fill="#000"/>
<rect x="629" y="338" width="1" height="6" fill="#000"/>
<rect x="627" y="332" width="5" height="6" fill="#000"/>
<rect x="628" y="333" width="3" height="4" fill="#44ff44"/>
<rect x="634" y="327" width="1" height="5" fill="#000"/>
<rect x="632" y="332" width="5" height="2" fill="#000"/>
<rect x="640" y="324" width="1" height="2" fill="#000"/>
<rect x="640" y="332" width="1" height="5" fill="#000"/>
<rect x="638" y="326" width="5" height="6" fill="#000"/>
<rect x="639" y="327" width="3" height="4" fill="#44ff44"/>
<rect x="646" y="327" width="1" height="1" fill="#000"/>
<rect x="646" y="331" width="1" height="5" fill="#000"/>
<rect x="644" y="328" width="5" height="3" fill="#000"/>
<rect x="645" y="329" width="3" height="1" fill="#ff4444"/>
<rect x="651" y="328" width="1" height="5" fill="#000"/>
<rect x="651" y="337" width="1" height="1" fill="#000"/>
<rect x="649" y="333" width="5" height="4" fill="#000"/>
<rect x="650" y="334" width="3" height="2" fill="#ff4444"/>
<rect x="657" y="327" width="1" height="4" fill="#000"/>
<rect x="655" y="331" width="5" height="7" fill="#000"/>
<rect x="656" y="332" width="3" height="5" fill="#44ff44"/>
<rect x="663" y="332" width="1" height="8" fill="#000"/>
<rect x="661" y="325" width="5" height="7" fill="#000"/>
<rect x="662" y="326" width="3" height="5" fill="#44ff44"/>
<rect x="668" y="319" width="1" height="2" fill="#000"/>
<rect x="668" y="327" width="1" height="1" fill="#000"/>
<rect x="666" y="321" width="5" height="6" fill="#000"/>
<rect x="667" y="322" width="3" height="4" fill="#44ff44"/>
<rect x="674" y="291" width="1" height="15" fill="#000"/>
<rect x="672" y="306" width="5" height="16" fill="#000"/>
<rect x="673" y="307" width="3" height="14" fill="#44ff44"/>
<rect x="680" y="299" width="1" height="3" fill="#000"/>
<rect x="680" y="306" width="1" height="1" fill="#000"/>
<rect x="678" y="302" width="5" height="4" fill="#000"/>
<rect x="679" y="303" width="3" height="2" fill="#44ff44"/>
<rect x="685" y="296" width="1" height="5" fill="#000"/>
<rect x="683" y="301" width="5" height="13" fill="#000"/>
<rect x="684" y="302" width="3" height="11" fill="#ff4444"/>
<rect x="691" y="304" width="1" height="1" fill="#000"/>
<rect x="691" y="311" width="1" height="5" fill="#000"/>
<rect x="689" y="305" width="5" height="6" fill="#000"/>
<rect x="690" y="306" width="3" height="4" fill="#44ff44"/>
<rect x="697" y="298" width="1" height="4" fill="#000"/>
<rect x="697" y="307" width="1" height="4" fill="#000"/>
<rect x="695" y="302" width="5" height="5" fill="#000"/>
<rect x="696" y="303" width="3" height="3" fill="#44ff44"/>
<rect x="702" y="290" width="1" height="1" fill="#000"/>
<rect x="700" y="291" width="5" height="11" fill="#000"/>
<rect x="701" y="292" width="3" height="9" fill="#44ff44"/>
<rect x="708" y="297" width="1" height="4" fill="#000"/>
<rect x="706" y="291" width="5" height="6" fill="#000"/>
<rect x="707" y="292" width="3" height="4" fill="#ff4444"/>
<rect x="714" y="287" width="1" height="4" fill="#000"/>
<rect x="714" y="295" width="1" height="3" fill="#000"/>
<rect x="712" y="291" width="5" height="4" fill="#000"/>
<rect x="713" y="292" width="3" height="2" fill="#44ff44"/>
<rect x="719" y="286" width="1" height="2" fill="#000"/>
<rect x="717" y="288" width="5" height="4" fill="#000"/>
<rect x="718" y="289" width="3" height="2" fill="#44ff44"/>
<rect x="725" y="275" width="1" height="2" fill="#000"/>
<rect x="723" y="277" width="5" height="13" fill="#000"/>
<rect x="724" y="278" width="3" height="11" fill="#44ff44"/>
<rect x="731" y="273" width="1" height="3" fill="#000"/>
<rect x="731" y="281" width="1" height="1" fill="#000"/>
<rect x="729" y="276" width="5" height="5" fill="#000"/>
<rect x="730" y="277" width="3" height="3" fill="#ff4444"/>
<rect x="736" y="277" width="1" height="1" fill="#000"/>
<rect x="736" y="281" width="1" height="6" fill="#000"/>
<rect x="734" y="278" width="5" height="3" fill="#000"/>
<rect x="735" y="279" width="3" height="1" fill="#44ff44"/>
<rect x="742" y="272" width="1" height="5" fill="#000"/>
<rect x="740" y="277" width="5" height="8" fill="#000"/>
<rect x="741" y="278" width="3" height="6" fill="#ff4444"/>
<rect x="748" y="279" width="1" height="3" fill="#000"/>
<rect x="748" y="304" width="1" height="10" fill="#000"/>
<rect x="746" y="282" width="5" height="22" fill="#000"/>
<rect x="747" y="283" width="3" height="20" fill="#ff4444"/>
<rect x="753" y="318" width="1" height="2" fill="#000"/>
<rect x="751" y="305" width="5" height="13" fill="#000"/>
<rect x="752" y="306" width="3" height="11" fill="#ff4444"/>
<rect x="759" y="312" width="1" height="4" fill="#000"/>
<rect x="759" y="318" width="1" height="1" fill="#000"/>
<rect x="757" y="316" width="5" height="2" fill="#000"/>
<rect x="765" y="311" width="1" height="1" fill="#000"/>
<rect x="763" y="312" width="5" height="5" fill="#000"/>
<rect x="764" y="313" width="3" height="3" fill="#44ff44"/>
<rect x="770" y="317" width="1" height="5" fill="#000"/>
<rect x="768" y="313" width="5" height="4" fill="#000"/>
<rect x="769" y="314" width="3" height="2" fill="#ff4444"/>
<rect x="776" y="322" width="1" height="4" fill="#000"/>
<rect x="774" y="316" width="5" height="6" fill="#000"/>
<rect x="775" y="317" width="3" height="4" fill="#ff4444"/>
<rect x="782" y="318" width="1" height="4" fill="#000"/>
<rect x="780" y="322" width="5" height="9" fill="#000"/>
<rect x="781" y="323" width="3" height="7" fill="#ff4444"/>
<rect x="787" y="326" width="1" height="4" fill="#000"/>
<rect x="787" y="332" width="1" height="2" fill="#000"/>
<rect x="785" y="330" width="5" height="2" fill="#000"/>
<rect x="793" y="336" width="1" height="6" fill="#000"/>
<rect x="791" y="330" width="5" height="6" fill="#000"/>
<rect x="792" y="331" width="3" height="4" fill="#ff4444"/>
<rect x="799" y="332" width="1" height="5" fill="#000"/>
<rect x="799" y="344" width="1" height="2" fill="#000"/>
<rect x="797" y="337" width="5" height="7" fill="#000"/>
<rect x="798" y="338" width="3" height="5" fill="#ff4444"/>
<rect x="804" y="339" width="1" height="3" fill="#000"/>
<rect x="804" y="349" width="1" height="1" fill="#000"/>
<rect x="802" y="342" width="5" height="7" fill="#000"/>
<rect x="803" y="343" width="3" height="5" fill="#ff4444"/>
<rect x="810" y="344" width="1" height="4" fill="#000"/>
<rect x="808" y="348" width="5" height="16" fill="#000"/>
<rect x="809" y="349" width="3" height="14" fill="#ff4444"/>
<rect x="816" y="350" width="1" height="1" fill="#000"/>
<rect x="816" y="361" width="1" height="4" fill="#000"/>
<rect x="814" y="351" width="5" height="10" fill="#000"/>
<rect x="815" y="352" width="3" height="8" fill="#44ff44"/>
<rect x="821" y="346" width="1" height="2" fill="#000"/>
<rect x="821" y="352" width="1" height="6" fill="#000"/>
<rect x="819" y="348" width="5" height="4" fill="#000"/>
<rect x="820" y="349" width="3" height="2" fill="#44ff44"/>
<rect x="827" y="333" width="1" height="5" fill="#000"/>
<rect x="827" y="351" width="1" height="2" fill="#000"/>
<rect x="825" y="338" width="5" height="13" fill="#000"/>
<rect x="826" y="339" width="3" height="11" fill="#44ff44"/>
<rect x="833" y="334" width="1" height="3" fill="#000"/>
<rect x="831" y="337" width="5" height="3" fill="#000"/>
<rect x="832" y="338" width="3" height="1" fill="#44ff44"/>
<rect x="838" y="340" width="1" height="2" fill="#000"/>
<rect x="836" y="335" width="5" height="5" fill="#000"/>
<rect x="837" y="336" width="3" height="3" fill="#44ff44"/>
<rect x="844" y="334" width="1" height="1" fill="#000"/>
<rect x="844" y="337" width="1" height="6" fill="#000"/>
<rect x="842" y="335" width="5" height="2" fill="#000"/>
<rect x="850" y="322" width="1" height="4" fill="#000"/>
<rect x="850" y="336" width="1" height="2" fill="#000"/>
<rect x="848" y="326" width="5" height="10" fill="#000"/>
<rect x="849" y="327" width="3" height="8" fill="#44ff44"/>
<rect x="855" y="319" width="1" height="2" fill="#000"/>
<rect x="855" y="326" width="1" height="2" fill="#000"/>
<rect x="853" y="321" width="5" height="5" fill="#000"/>
<rect x="854" y="322" width="3" height="3" fill="#44ff44"/>
<rect x="861" y="319" width="1" height="1" fill="#000"/>
<rect x="861" y="324" width="1" height="1" fill="#000"/>
<rect x="859" y="320" width="5" height="4" fill="#000"/>
<rect x="860" y="321" width="3" height="2" fill="#ff4444"/>
<rect x="867" y="321" width="1" height="3" fill="#000"/>
<rect x="867" y="326" width="1" height="5" fill="#000"/>
<rect x="865" y="324" width="5" height="2" fill="#000"/>
<rect x="872" y="318" width="1" height="6" fill="#000"/>
<rect x="870" y="324" width="5" height="9" fill="#000"/>
<rect x="871" y="325" width="3" height="7" fill="#ff4444"/>
<rect x="878" y="328" width="1" height="2" fill="#000"/>
<rect x="878" y="334" width="1" height="4" fill="#000"/>
<rect x="876" y="330" width="5" height="4" fill="#000"/>
<rect x="877" y="331" width="3" height="2" fill="#44ff44"/>
<rect x="884" y="323" width="1" height="4" fill="#000"/>
<rect x="884" y="329" width="1" height="2" fill="#000"/>
<rect x="882" y="327" width="5" height="2" fill="#000"/>
<rect x="889" y="324" width="1" height="3" fill="#000"/>
<rect x="889" y="329" width="1" height="3" fill="#000"/>
<rect x="887" y="327" width="5" height="2" fill="#000"/>
<rect x="893" y="324" width="5" height="6" fill="#000"/>
<rect x="894" y="325" width="3" height="4" fill="#44ff44"/>
<rect x="3" y="436" width="8" height="8" fill="#000"/>
<rect x="4" y="437" width="6" height="6" fill="#66dd66"/>
<text x="14" y="444" text-anchor="start" fill="#000" style="color:#000" textLength="182.38" lengthAdjust="spacing">IAC InterActive Corp. Volumen in USD</text>
<rect x="28" y="449" width="1" height="68" fill="#dddddd"/>
<rect x="50" y="449" width="1" height="68" fill="#dddddd"/>
<rect x="73" y="449" width="1" height="68" fill="#dddddd"/>
<rect x="101" y="449" width="1" height="68" fill="#dddddd"/>
<rect x="124" y="449" width="1" height="68" fill="#dddddd"/>
<rect x="147" y="449" width="1" height="68" fill="#dddddd"/>
<rect x="175" y="449" width="1" height="68" fill="#dddddd"/>
<rect x="198" y="449" width="1" height="68" fill="#dddddd"/>
<rect x="226" y="449" width="1" height="68" fill="#dddddd"/>
<rect x="249" y="449" width="1" height="68" fill="#dddddd"/>
<rect x="271" y="449" width="1" height="68" fill="#dddddd"/>
<rect x="300" y="449" width="1" height="68" fill="#dddddd"/>
<rect x="322" y="449" width="1" height="68" fill="#dddddd"/>
<rect x="345" y="449" width="1" height="68" fill="#dddddd"/>
<rect x="368" y="449" width="1" height="68" fill="#dddddd"/>
<rect x="396" y="449" width="1" height="68" fill="#dddddd"/>
<rect x="419" y="449" width="1" height="68" fill="#dddddd"/>
<rect x="447" y="449" width="1" height="68" fill="#dddddd"/>
<rect x="470" y="449" width="1" height="68" fill="#dddddd"/>
<rect x="493" y="449" width="1" height="68" fill="#dddddd"/>
<rect x="521" y="449" width="1" height="68" fill="#dddddd"/>
<rect x="544" y="449" width="1" height="68" fill="#dddddd"/>
<rect x="566" y="449" width="1" height="68" fill="#dddddd"/>
<rect x="595" y="449" width="1" height="68" fill="#dddddd"/>
<rect x="617" y="449" width="1" height="68" fill="#dddddd"/>
<rect x="640" y="449" width="1" height="68" fill="#dddddd"/>
<rect x="668" y="449" width="1" height="68" fill="#dddddd"/>
<rect x="691" y="449" width="1" height="68" fill="#dddddd"/>
<rect x="714" y="449" width="1" height="68" fill="#dddddd"/>
<rect x="742" y="449" width="1" height="68" fill="#dddddd"/>
<rect x="765" y="449" width="1" height="68" fill="#dddddd"/>
<rect x="787" y="449" width="1" height="68" fill="#dddddd"/>
<rect x="816" y="449" width="1" height="68" fill="#dddddd"/>
<rect x="838" y="449" width="1" height="68" fill="#dddddd"/>
<rect x="867" y="449" width="1" height="68" fill="#dddddd"/>
<rect x="889" y="449" width="1" height="68" fill="#dddddd"/>
<rect x="2" y="449" width="897" height="1" fill="#dddddd"/>
<text x="902" y="453" text-anchor="start" fill="#000" style="color:#000" textLength="35.19" lengthAdjust="spacing">1.000M</text>
<rect x="2" y="482" width="897" height="1" fill="#dddddd"/>
<text x="902" y="486" text-anchor="start" fill="#000" style="color:#000" textLength="26.02" lengthAdjust="spacing">500M</text>
<rect x="2" y="516" width="897" height="1" fill="#dddddd"/>
<text x="902" y="520" text-anchor="start" fill="#000" style="color:#000" textLength="13.78" lengthAdjust="spacing">0M</text>
<rect x="2" y="449" width="897" height="1" fill="#dddddd"/>
<rect x="2" y="516" width="897" height="1" fill="#dddddd"/>
<rect x="2" y="449" width="1" height="68" fill="#dddddd"/>
<rect x="898" y="449" width="1" height="68" fill="#dddddd"/>
<rect x="3" y="509" width="4" height="8" fill="#66dd66"/>
<rect x="9" y="511" width="4" height="6" fill="#66dd66"/>
<rect x="14" y="512" width="4" height="5" fill="#dd6666"/>
<rect x="20" y="512" width="4" height="5" fill="#dd6666"/>
<rect x="26" y="511" width="4" height="6" fill="#dd6666"/>
<rect x="31" y="512" width="4" height="5" fill="#66dd66"/>
<rect x="37" y="494" width="4" height="23" fill="#66dd66"/>
<rect x="43" y="495" width="4" height="22" fill="#dd6666"/>
<rect x="48" y="503" width="4" height="14" fill="#66dd66"/>
<rect x="54" y="504" width="4" height="13" fill="#66dd66"/>
<rect x="60" y="501" width="4" height="16" fill="#66dd66"/>
<rect x="65" y="506" width="4" height="11" fill="#66dd66"/>
<rect x="71" y="504" width="4" height="13" fill="#66dd66"/>
<rect x="77" y="499" width="4" height="18" fill="#dd6666"/>
<rect x="82" y="501" width="4" height="16" fill="#dd6666"/>
<rect x="88" y="497" width="4" height="20" fill="#66dd66"/>
<rect x="94" y="474" width="4" height="43" fill="#dd6666"/>
<rect x="99" y="506" width="4" height="11" fill="#dd6666"/>
<rect x="105" y="503" width="4" height="14" fill="#dd6666"/>
<rect x="111" y="499" width="4" height="18" fill="#dd6666"/>
<rect x="116" y="488" width="4" height="29" fill="#66dd66"/>
<rect x="122" y="508" width="4" height="9" fill="#dd6666"/>
<rect x="128" y="500" width="4" height="17" fill="#dd6666"/>
<rect x="133" y="507" width="4" height="10" fill="#dd6666"/>
<rect x="139" y="506" width="4" height="11" fill="#66dd66"/>
<rect x="145" y="509" width="4" height="8" fill="#dd6666"/>
<rect x="150" y="510" width="4" height="7" fill="#dd6666"/>
<rect x="156" y="508" width="4" height="9" fill="#dd6666"/>
<rect x="162" y="508" width="4" height="9" fill="#66dd66"/>
<rect x="167" y="511" width="4" height="6" fill="#66dd66"/>
<rect x="173" y="509" width="4" height="8" fill="#dd6666"/>
<rect x="179" y="513" width="4" height="4" fill="#dd6666"/>
<rect x="184" y="503" width="4" height="14" fill="#66dd66"/>
<rect x="190" y="507" width="4" height="10" fill="#66dd66"/>
<rect x="196" y="507" width="4" height="10" fill="#dd6666"/>
<rect x="201" y="507" width="4" height="10" fill="#66dd66"/>
<rect x="207" y="507" width="4" height="10" fill="#66dd66"/>
<rect x="213" y="510" width="4" height="7" fill="#66dd66"/>
<rect x="218" y="507" width="4" height="10" fill="#66dd66"/>
<rect x="224" y="507" width="4" height="10" fill="#dd6666"/>
<rect x="230" y="503" width="4" height="14" fill="#dd6666"/>
<rect x="235" y="508" width="4" height="9" fill="#dd6666"/>
<rect x="241" y="506" width="4" height="11" fill="#dd6666"/>
<rect x="247" y="485" width="4" height="32" fill="#66dd66"/>
<rect x="252" y="507" width="4" height="10" fill="#66dd66"/>
<rect x="258" y="506" width="4" height="11" fill="#dd6666"/>
<rect x="264" y="512" width="4" height="5" fill="#66dd66"/>
<rect x="269" y="511" width="4" height="6" fill="#dd6666"/>
<rect x="275" y="508" width="4" height="9" fill="#66dd66"/>
<rect x="281" y="506" width="4" height="11" fill="#66dd66"/>
<rect x="286" y="510" width="4" height="7" fill="#dd6666"/>
<rect x="292" y="507" width="4" height="10" fill="#dd6666"/>
<rect x="298" y="506" width="4" height="11" fill="#66dd66"/>
<rect x="303" y="508" width="4" height="9" fill="#66dd66"/>
<rect x="309" y="507" width="4" height="10" fill="#dd6666"/>
<rect x="315" y="509" width="4" height="8" fill="#66dd66"/>
<rect x="320" y="507" width="4" height="10" fill="#dd6666"/>
<rect x="326" y="510" width="4" height="7" fill="#dd6666"/>
<rect x="332" y="506" width="4" height="11" fill="#66dd66"/>
<rect x="337" y="510" width="4" height="7" fill="#dd6666"/>
<rect x="343" y="510" width="4" height="7" fill="#dd6666"/>
<rect x="349" y="510" width="4" height="7" fill="#66dd66"/>
<rect x="354" y="512" width="4" height="5" fill="#dd6666"/>
<rect x="360" y="511" width="4" height="6" fill="#dd6666"/>
<rect x="366" y="508" width="4" height="9" fill="#dd6666"/>
<rect x="371" y="510" width="4" height="7" fill="#dd6666"/>
<rect x="377" y="508" width="4" height="9" fill="#66dd66"/>
<rect x="383" y="511" width="4" height="6" fill="#66dd66"/>
<rect x="388" y="513" width="4" height="4" fill="#66dd66"/>
<rect x="394" y="512" width="4" height="5" fill="#66dd66"/>
<rect x="400" y="512" width="4" height="5" fill="#dd6666"/>
<rect x="405" y="507" width="4" height="10" fill="#dd6666"/>
<rect x="411" y="509" width="4" height="8" fill="#66dd66"/>
<rect x="417" y="512" width="4" height="5" fill="#dd6666"/>
<rect x="422" y="511" width="4" height="6" fill="#66dd66"/>
<rect x="428" y="512" width="4" height="5" fill="#dd6666"/>
<rect x="434" y="512" width="4" height="5" fill="#66dd66"/>
<rect x="439" y="511" width="4" height="6" fill="#dd6666"/>
<rect x="445" y="511" width="4" height="6" fill="#66dd66"/>
<rect x="451" y="513" width="4" height="4" fill="#dd6666"/>
<rect x="457" y="513" width="4" height="4" fill="#dd6666"/>
<rect x="462" y="512" width="4" height="5" fill="#dd6666"/>
<rect x="468" y="514" width="4" height="3" fill="#dd6666"/>
<rect x="474" y="512" width="4" height="5" fill="#66dd66"/>
<rect x="479" y="514" width="4" height="3" fill="#dd6666"/>
<rect x="485" y="509" width="4" height="8" fill="#dd6666"/>
<rect x="491" y="512" width="4" height="5" fill="#66dd66"/>
<rect x="496" y="512" width="4" height="5" fill="#66dd66"/>
<rect x="502" y="510" width="4" height="7" fill="#dd6666"/>
<rect x="508" y="511" width="4" height="6" fill="#66dd66"/>
<rect x="513" y="508" width="4" height="9" fill="#66dd66"/>
<rect x="519" y="508" width="4" height="9" fill="#dd6666"/>
<rect x="525" y="507" width="4" height="10" fill="#66dd66"/>
<rect x="530" y="509" width="4" height="8" fill="#dd6666"/>
<rect x="536" y="514" width="4" height="3" fill="#66dd66"/>
<rect x="542" y="510" width="4" height="7" fill="#66dd66"/>
<rect x="547" y="504" width="4" height="13" fill="#dd6666"/>
<rect x="553" y="506" width="4" height="11" fill="#dd6666"/>
<rect x="559" y="511" width="4" height="6" fill="#dd6666"/>
<rect x="564" y="512" width="4" height="5" fill="#66dd66"/>
<rect x="570" y="512" width="4" height="5" fill="#66dd66"/>
<rect x="576" y="512" width="4" height="5" fill="#66dd66"/>
<rect x="581" y="510" width="4" height="7" fill="#66dd66"/>
<rect x="587" y="511" width="4" height="6" fill="#66dd66"/>
<rect x="593" y="512" width="4" height="5" fill="#66dd66"/>
<rect x="598" y="511" width="4" height="6" fill="#dd6666"/>
<rect x="604" y="508" width="4" height="9" fill="#66dd66"/>
<rect x="610" y="512" width="4" height="5" fill="#dd6666"/>
<rect x="615" y="512" width="4" height="5" fill="#66dd66"/>
<rect x="621" y="509" width="4" height="8" fill="#dd6666"/>
<rect x="627" y="513" width="4" height="4" fill="#66dd66"/>
<rect x="632" y="512" width="4" height="5" fill="#dd6666"/>
<rect x="638" y="512" width="4" height="5" fill="#66dd66"/>
<rect x="644" y="513" width="4" height="4" fill="#dd6666"/>
<rect x="649" y="513" width="4" height="4" fill="#dd6666"/>
<rect x="655" y="511" width="4" height="6" fill="#66dd66"/>
<rect x="661" y="511" width="4" height="6" fill="#66dd66"/>
<rect x="666" y="511" width="4" height="6" fill="#66dd66"/>
<rect x="672" y="508" width="4" height="9" fill="#66dd66"/>
<rect x="678" y="512" width="4" height="5" fill="#66dd66"/>
<rect x="683" y="513" width="4" height="4" fill="#dd6666"/>
<rect x="689" y="512" width="4" height="5" fill="#66dd66"/>
<rect x="695" y="513" width="4" height="4" fill="#66dd66"/>
<rect x="700" y="511" width="4" height="6" fill="#66dd66"/>
<rect x="706" y="512" width="4" height="5" fill="#dd6666"/>
<rect x="712" y="514" width="4" height="3" fill="#66dd66"/>
<rect x="717" y="514" width="4" height="3" fill="#66dd66"/>
<rect x="723" y="514" width="4" height="3" fill="#66dd66"/>
<rect x="729" y="513" width="4" height="4" fill="#dd6666"/>
<rect x="734" y="514" width="4" height="3" fill="#66dd66"/>
<rect x="740" y="513" width="4" height="4" fill="#dd6666"/>
<rect x="746" y="512" width="4" height="5" fill="#dd6666"/>
<rect x="751" y="514" width="4" height="3" fill="#dd6666"/>
<rect x="757" y="513" width="4" height="4" fill="#66dd66"/>
<rect x="763" y="514" width="4" height="3" fill="#66dd66"/>
<rect x="768" y="514" width="4" height="3" fill="#dd6666"/>
<rect x="774" y="509" width="4" height="8" fill="#dd6666"/>
<rect x="780" y="513" width="4" height="4" fill="#dd6666"/>
<rect x="785" y="512" width="4" height="5" fill="#66dd66"/>
<rect x="791" y="512" width="4" height="5" fill="#dd6666"/>
<rect x="797" y="514" width="4" height="3" fill="#dd6666"/>
<rect x="802" y="513" width="4" height="4" fill="#dd6666"/>
<rect x="808" y="514" width="4" height="3" fill="#dd6666"/>
<rect x="814" y="515" width="4" height="2" fill="#66dd66"/>
<rect x="819" y="513" width="4" height="4" fill="#66dd66"/>
<rect x="825" y="513" width="4" height="4" fill="#66dd66"/>
<rect x="831" y="515" width="4" height="2" fill="#66dd66"/>
<rect x="836" y="514" width="4" height="3" fill="#66dd66"/>
<rect x="842" y="514" width="4" height="3" fill="#66dd66"/>
<rect x="848" y="514" width="4" height="3" fill="#66dd66"/>
<rect x="853" y="514" width="4" height="3" fill="#66dd66"/>
<rect x="859" y="515" width="4" height="2" fill="#dd6666"/>
<rect x="865" y="512" width="4" height="5" fill="#dd6666"/>
<rect x="870" y="514" width="4" height="3" fill="#dd6666"/>
<rect x="876" y="514" width="4" height="3" fill="#66dd66"/>
<rect x="882" y="515" width="4" height="2" fill="#66dd66"/>
<rect x="887" y="515" width="4" height="2" fill="#66dd66"/>
<rect x="893" y="516" width="4" height="1" fill="#66dd66"/>
<rect x="3" y="528" width="8" height="8" fill="#000"/>
<rect x="4" y="529" width="6" height="6" fill="#0000ff"/>
<text x="14" y="536" text-anchor="start" fill="#000" style="color:#000" textLength="120.59" lengthAdjust="spacing">MACD (26, 12): -0,63124</text>
<rect x="159" y="528" width="8" height="8" fill="#000"/>
<rect x="160" y="529" width="6" height="6" fill="#ff00ff"/>
<text x="170" y="536" text-anchor="start" fill="#000" style="color:#000" textLength="80.33" lengthAdjust="spacing">EXP (9): -1,2285</text>
<rect x="274" y="528" width="8" height="8" fill="#000"/>
<rect x="275" y="529" width="6" height="6" fill="#008000"/>
<text x="285" y="536" text-anchor="start" fill="#000" style="color:#000" textLength="101.51" lengthAdjust="spacing">Divergence: 0,59728</text>
<rect x="28" y="541" width="1" height="120" fill="#dddddd"/>
<rect x="50" y="541" width="1" height="120" fill="#dddddd"/>
<rect x="73" y="541" width="1" height="120" fill="#dddddd"/>
<rect x="101" y="541" width="1" height="120" fill="#dddddd"/>
<rect x="124" y="541" width="1" height="120" fill="#dddddd"/>
<rect x="147" y="541" width="1" height="120" fill="#dddddd"/>
<rect x="175" y="541" width="1" height="120" fill="#dddddd"/>
<rect x="198" y="541" width="1" height="120" fill="#dddddd"/>
<rect x="226" y="541" width="1" height="120" fill="#dddddd"/>
<rect x="249" y="541" width="1" height="120" fill="#dddddd"/>
<rect x="271" y="541" width="1" height="120" fill="#dddddd"/>
<rect x="300" y="541" width="1" height="120" fill="#dddddd"/>
<rect x="322" y="541" width="1" height="120" fill="#dddddd"/>
<rect x="345" y="541" width="1" height="120" fill="#dddddd"/>
<rect x="368" y="541" width="1" height="120" fill="#dddddd"/>
<rect x="396" y="541" width="1" height="120" fill="#dddddd"/>
<rect x="419" y="541" width="1" height="120" fill="#dddddd"/>
<rect x="447" y="541" width="1" height="120" fill="#dddddd"/>
<rect x="470" y="541" width="1" height="120" fill="#dddddd"/>
<rect x="493" y="541" width="1" height="120" fill="#dddddd"/>
<rect x="521" y="541" width="1" height="120" fill="#dddddd"/>
<rect x="544" y="541" width="1" height="120" fill="#dddddd"/>
<rect x="566" y="541" width="1" height="120" fill="#dddddd"/>
<rect x="595" y="541" width="1" height="120" fill="#dddddd"/>
<rect x="617" y="541" width="1" height="120" fill="#dddddd"/>
<rect x="640" y="541" width="1" height="120" fill="#dddddd"/>
<rect x="668" y="541" width="1" height="120" fill="#dddddd"/>
<rect x="691" y="541" width="1" height="120" fill="#dddddd"/>
<rect x="714" y="541" width="1" height="120" fill="#dddddd"/>
<rect x="742" y="541" width="1" height="120" fill="#dddddd"/>
<rect x="765" y="541" width="1" height="120" fill="#dddddd"/>
<rect x="787" y="541" width="1" height="120" fill="#dddddd"/>
<rect x="816" y="541" width="1" height="120" fill="#dddddd"/>
<rect x="838" y="541" width="1" height="120" fill="#dddddd"/>
<rect x="867" y="541" width="1" height="120" fill="#dddddd"/>
<rect x="889" y="541" width="1" height="120" fill="#dddddd"/>
<rect x="2" y="541" width="897" height="1" fill="#dddddd"/>
<text x="902" y="545" text-anchor="start" fill="#000" style="color:#000">40</text>
<rect x="2" y="571" width="897" height="1" fill="#dddddd"/>
<text x="902" y="575" text-anchor="start" fill="#000" style="color:#000">20</text>
<rect x="2" y="600" width="897" height="1" fill="#dddddd"/>
<text x="902" y="604" text-anchor="start" fill="#000" style="color:#000">0</text>
<rect x="2" y="630" width="897" height="1" fill="#dddddd"/>
<text x="902" y="634" text-anchor="start" fill="#000" style="color:#000">-20</text>
<rect x="2" y="660" width="897" height="1" fill="#dddddd"/>
<text x="902" y="664" text-anchor="start" fill="#000" style="color:#000">-40</text>
<rect x="2" y="541" width="897" height="1" fill="#dddddd"/>
<rect x="2" y="660" width="897" height="1" fill="#dddddd"/>
<rect x="2" y="541" width="1" height="120" fill="#dddddd"/>
<rect x="898" y="541" width="1" height="120" fill="#dddddd"/>
<rect x="3" y="588" width="4" height="14" fill="#007800"/>
<rect x="9" y="585" width="4" height="17" fill="#007800"/>
<rect x="14" y="585" width="4" height="17" fill="#007800"/>
<rect x="20" y="587" width="4" height="15" fill="#007800"/>
<rect x="26" y="591" width="4" height="11" fill="#007800"/>
<rect x="31" y="593" width="4" height="9" fill="#007800"/>
<rect x="37" y="596" width="4" height="6" fill="#007800"/>
<rect x="43" y="600" width="4" height="2" fill="#007800"/>
<rect x="48" y="601" width="4" height="2" fill="#007800"/>
<rect x="54" y="601" width="4" height="2" fill="#007800"/>
<rect x="60" y="601" width="4" height="2" fill="#007800"/>
<rect x="65" y="601" width="4" height="2" fill="#007800"/>
<rect x="71" y="601" width="4" height="2" fill="#007800"/>
<rect x="77" y="601" width="4" height="4" fill="#007800"/>
<rect x="82" y="601" width="4" height="6" fill="#007800"/>
<rect x="88" y="601" width="4" height="5" fill="#007800"/>
<rect x="94" y="601" width="4" height="14" fill="#007800"/>
<rect x="99" y="601" width="4" height="19" fill="#007800"/>
<rect x="105" y="601" width="4" height="22" fill="#007800"/>
<rect x="111" y="601" width="4" height="23" fill="#007800"/>
<rect x="116" y="601" width="4" height="22" fill="#007800"/>
<rect x="122" y="601" width="4" height="21" fill="#007800"/>
<rect x="128" y="601" width="4" height="20" fill="#007800"/>
<rect x="133" y="601" width="4" height="19" fill="#007800"/>
<rect x="139" y="601" width="4" height="17" fill="#007800"/>
<rect x="145" y="601" width="4" height="15" fill="#007800"/>
<rect x="150" y="601" width="4" height="14" fill="#007800"/>
<rect x="156" y="601" width="4" height="12" fill="#007800"/>
<rect x="162" y="601" width="4" height="10" fill="#007800"/>
<rect x="167" y="601" width="4" height="8" fill="#007800"/>
<rect x="173" y="601" width="4" height="6" fill="#007800"/>
<rect x="179" y="601" width="4" height="5" fill="#007800"/>
<rect x="184" y="601" width="4" height="3" fill="#007800"/>
<rect x="190" y="601" width="4" height="2" fill="#007800"/>
<rect x="196" y="600" width="4" height="2" fill="#007800"/>
<rect x="201" y="598" width="4" height="4" fill="#007800"/>
<rect x="207" y="596" width="4" height="6" fill="#007800"/>
<rect x="213" y="595" width="4" height="7" fill="#007800"/>
<rect x="218" y="594" width="4" height="8" fill="#007800"/>
<rect x="224" y="595" width="4" height="7" fill="#007800"/>
<rect x="230" y="596" width="4" height="6" fill="#007800"/>
<rect x="235" y="597" width="4" height="5" fill="#007800"/>
<rect x="241" y="599" width="4" height="3" fill="#007800"/>
<rect x="247" y="599" width="4" height="3" fill="#007800"/>
<rect x="252" y="599" width="4" height="3" fill="#007800"/>
<rect x="258" y="600" width="4" height="2" fill="#007800"/>
<rect x="264" y="599" width="4" height="3" fill="#007800"/>
<rect x="269" y="599" width="4" height="3" fill="#007800"/>
<rect x="275" y="599" width="4" height="3" fill="#007800"/>
<rect x="281" y="598" width="4" height="4" fill="#007800"/>
<rect x="286" y="599" width="4" height="3" fill="#007800"/>
<rect x="292" y="599" width="4" height="3" fill="#007800"/>
<rect x="298" y="599" width="4" height="3" fill="#007800"/>
<rect x="303" y="598" width="4" height="4" fill="#007800"/>
<rect x="309" y="600" width="4" height="2" fill="#007800"/>
<rect x="315" y="601" width="4" height="2" fill="#007800"/>
<rect x="320" y="601" width="4" height="2" fill="#007800"/>
<rect x="326" y="601" width="4" height="3" fill="#007800"/>
<rect x="332" y="601" width="4" height="3" fill="#007800"/>
<rect x="337" y="601" width="4" height="3" fill="#007800"/>
<rect x="343" y="601" width="4" height="3" fill="#007800"/>
<rect x="349" y="601" width="4" height="2" fill="#007800"/>
<rect x="354" y="601" width="4" height="2" fill="#007800"/>
<rect x="360" y="601" width="4" height="3" fill="#007800"/>
<rect x="366" y="601" width="4" height="3" fill="#007800"/>
<rect x="371" y="601" width="4" height="4" fill="#007800"/>
<rect x="377" y="601" width="4" height="4" fill="#007800"/>
<rect x="383" y="601" width="4" height="3" fill="#007800"/>
<rect x="388" y="601" width="4" height="2" fill="#007800"/>
<rect x="394" y="600" width="4" height="2" fill="#007800"/>
<rect x="400" y="600" width="4" height="2" fill="#007800"/>
<rect x="405" y="600" width="4" height="2" fill="#007800"/>
<rect x="411" y="600" width="4" height="2" fill="#007800"/>
<rect x="417" y="600" width="4" height="2" fill="#007800"/>
<rect x="422" y="599" width="4" height="3" fill="#007800"/>
<rect x="428" y="600" width="4" height="2" fill="#007800"/>
<rect x="434" y="600" width="4" height="2" fill="#007800"/>
<rect x="439" y="600" width="4" height="2" fill="#007800"/>
<rect x="445" y="599" width="4" height="3" fill="#007800"/>
<rect x="451" y="599" width="4" height="3" fill="#007800"/>
<rect x="457" y="599" width="4" height="3" fill="#007800"/>
<rect x="462" y="600" width="4" height="2" fill="#007800"/>
<rect x="468" y="600" width="4" height="2" fill="#007800"/>
<rect x="474" y="599" width="4" height="3" fill="#007800"/>
<rect x="479" y="600" width="4" height="2" fill="#007800"/>
<rect x="485" y="601" width="4" height="1" fill="#007800"/>
<rect x="491" y="601" width="4" height="1" fill="#007800"/>
<rect x="496" y="601" width="4" height="1" fill="#007800"/>
<rect x="502" y="601" width="4" height="1" fill="#007800"/>
<rect x="508" y="601" width="4" height="1" fill="#007800"/>
<rect x="513" y="601" width="4" height="1" fill="#007800"/>
<rect x="519" y="601" width="4" height="1" fill="#007800"/>
<rect x="525" y="601" width="4" height="1" fill="#007800"/>
<rect x="530" y="600" width="4" height="2" fill="#007800"/>
<rect x="536" y="600" width="4" height="2" fill="#007800"/>
<rect x="542" y="599" width="4" height="3" fill="#007800"/>
<rect x="547" y="599" width="4" height="3" fill="#007800"/>
<rect x="553" y="599" width="4" height="3" fill="#007800"/>
<rect x="559" y="599" width="4" height="3" fill="#007800"/>
<rect x="564" y="599" width="4" height="3" fill="#007800"/>
<rect x="570" y="599" width="4" height="3" fill="#007800"/>
<rect x="576" y="598" width="4" height="4" fill="#007800"/>
<rect x="581" y="597" width="4" height="5" fill="#007800"/>
<rect x="587" y="597" width="4" height="5" fill="#007800"/>
<rect x="593" y="596" width="4" height="6" fill="#007800"/>
<rect x="598" y="597" width="4" height="5" fill="#007800"/>
<rect x="604" y="597" width="4" height="5" fill="#007800"/>
<rect x="610" y="597" width="4" height="5" fill="#007800"/>
<rect x="615" y="598" width="4" height="4" fill="#007800"/>
<rect x="621" y="598" width="4" height="4" fill="#007800"/>
<rect x="627" y="598" width="4" height="4" fill="#007800"/>
<rect x="632" y="599" width="4" height="3" fill="#007800"/>
<rect x="638" y="599" width="4" height="3" fill="#007800"/>
<rect x="644" y="599" width="4" height="3" fill="#007800"/>
<rect x="649" y="599" width="4" height="3" fill="#007800"/>
<rect x="655" y="599" width="4" height="3" fill="#007800"/>
<rect x="661" y="599" width="4" height="3" fill="#007800"/>
<rect x="666" y="599" width="4" height="3" fill="#007800"/>
<rect x="672" y="598" width="4" height="4" fill="#007800"/>
<rect x="678" y="598" width="4" height="4" fill="#007800"/>
<rect x="683" y="598" width="4" height="4" fill="#007800"/>
<rect x="689" y="598" width="4" height="4" fill="#007800"/>
<rect x="695" y="598" width="4" height="4" fill="#007800"/>
<rect x="700" y="598" width="4" height="4" fill="#007800"/>
<rect x="706" y="598" width="4" height="4" fill="#007800"/>
<rect x="712" y="598" width="4" height="4" fill="#007800"/>
<rect x="717" y="598" width="4" height="4" fill="#007800"/>
<rect x="723" y="598" width="4" height="4" fill="#007800"/>
<rect x="729" y="598" width="4" height="4" fill="#007800"/>
<rect x="734" y="599" width="4" height="3" fill="#007800"/>
<rect x="740" y="599" width="4" height="3" fill="#007800"/>
<rect x="746" y="600" width="4" height="2" fill="#007800"/>
<rect x="751" y="601" width="4" height="1" fill="#007800"/>
<rect x="757" y="601" width="4" height="2" fill="#007800"/>
<rect x="763" y="601" width="4" height="2" fill="#007800"/>
<rect x="768" y="601" width="4" height="2" fill="#007800"/>
<rect x="774" y="601" width="4" height="2" fill="#007800"/>
<rect x="780" y="601" width="4" height="3" fill="#007800"/>
<rect x="785" y="601" width="4" height="3" fill="#007800"/>
<rect x="791" y="601" width="4" height="3" fill="#007800"/>
<rect x="797" y="601" width="4" height="3" fill="#007800"/>
<rect x="802" y="601" width="4" height="3" fill="#007800"/>
<rect x="808" y="601" width="4" height="3" fill="#007800"/>
<rect x="814" y="601" width="4" height="3" fill="#007800"/>
<rect x="819" y="601" width="4" height="3" fill="#007800"/>
<rect x="825" y="601" width="4" height="2" fill="#007800"/>
<rect x="831" y="601" width="4" height="1" fill="#007800"/>
<rect x="836" y="601" width="4" height="1" fill="#007800"/>
<rect x="842" y="601" width="4" height="1" fill="#007800"/>
<rect x="848" y="600" width="4" height="2" fill="#007800"/>
<rect x="853" y="600" width="4" height="2" fill="#007800"/>
<rect x="859" y="599" width="4" height="3" fill="#007800"/>
<rect x="865" y="599" width="4" height="3" fill="#007800"/>
<rect x="870" y="600" width="4" height="2" fill="#007800"/>
<rect x="876" y="600" width="4" height="2" fill="#007800"/>
<rect x="882" y="600" width="4" height="2" fill="#007800"/>
<rect x="887" y="600" width="4" height="2" fill="#007800"/>
<rect x="893" y="600" width="4" height="2" fill="#007800"/>
<path d="M5.10,576.60 C6.52,575.75 10.77,573.20 13.60,571.50 C16.43,569.80 19.27,567.97 22.10,566.40 C24.93,564.83 27.62,563.15 30.60,562.10 C33.58,561.05 36.58,560.38 40.00,560.10 C43.42,559.82 46.42,560.15 51.10,560.40 C55.78,560.65 63.85,561.32 68.10,561.60 C72.35,561.88 72.92,561.50 76.60,562.10 C80.28,562.70 86.80,564.07 90.20,565.20 C93.60,566.33 94.17,566.72 97.00,568.90 C99.83,571.08 103.52,574.88 107.20,578.30 C110.88,581.72 114.83,585.43 119.10,589.40 C123.37,593.37 128.53,598.42 132.80,602.10 C137.07,605.78 141.00,609.13 144.70,611.50 C148.40,613.87 151.58,614.73 155.00,616.30 C158.42,617.87 161.52,619.57 165.20,620.90 C168.88,622.23 173.13,623.52 177.10,624.30 C181.07,625.08 184.73,625.60 189.00,625.60 C193.27,625.60 198.43,624.95 202.70,624.30 C206.97,623.65 210.63,622.62 214.60,621.70 C218.57,620.78 222.25,619.65 226.50,618.80 C230.75,617.95 235.00,617.12 240.10,616.60 C245.20,616.08 251.43,615.98 257.10,615.70 C262.77,615.42 268.42,615.27 274.10,614.90 C279.78,614.53 284.38,613.93 291.20,613.50 C298.02,613.07 309.03,612.17 315.00,612.30 C320.97,612.43 322.17,613.75 327.00,614.30 C331.83,614.85 338.32,615.03 344.00,615.60 C349.68,616.17 355.42,617.03 361.10,617.70 C366.78,618.37 373.28,619.10 378.10,619.60 C382.92,620.10 385.47,620.57 390.00,620.70 C394.53,620.83 398.78,620.58 405.30,620.40 C411.82,620.22 422.28,619.92 429.10,619.60 C435.92,619.28 439.38,618.82 446.20,618.50 C453.02,618.18 462.62,617.75 470.00,617.70 C477.38,617.65 481.97,617.98 490.50,618.20 C499.03,618.42 512.68,619.05 521.20,619.00 C529.72,618.95 533.95,618.38 541.60,617.90 C549.25,617.42 560.02,616.77 567.10,616.10 C574.18,615.43 578.42,614.68 584.10,613.90 C589.78,613.12 594.38,612.33 601.20,611.40 C608.02,610.47 619.03,609.02 625.00,608.30 C630.97,607.58 632.17,607.52 637.00,607.10 C641.83,606.68 648.32,606.28 654.00,605.80 C659.68,605.32 665.42,604.75 671.10,604.20 C676.78,603.65 682.43,603.00 688.10,602.50 C693.77,602.00 699.43,601.70 705.10,601.20 C710.77,600.70 716.43,600.02 722.10,599.50 C727.77,598.98 733.42,598.33 739.10,598.10 C744.78,597.87 749.38,597.87 756.20,598.10 C763.02,598.33 774.65,599.18 780.00,599.50 C785.35,599.82 784.70,599.60 788.30,600.00 C791.90,600.40 797.17,601.30 801.60,601.90 C806.03,602.50 810.47,603.17 814.90,603.60 C819.33,604.03 823.77,604.38 828.20,604.50 C832.63,604.62 837.07,604.48 841.50,604.30 C845.93,604.12 850.37,603.67 854.80,603.40 C859.23,603.13 863.67,602.83 868.10,602.70 C872.53,602.57 876.75,602.67 881.40,602.60 C886.05,602.53 893.57,602.35 896.00,602.30" fill="none" stroke="#ff00ff" stroke-width="1.05" shape-rendering="geometricPrecision"/>
<path d="M5.10,563.50 C6.95,561.80 13.37,555.17 16.20,553.30 C19.03,551.43 19.83,552.25 22.10,552.30 C24.37,552.35 26.97,553.10 29.80,553.60 C32.63,554.10 36.55,554.30 39.10,555.30 C41.65,556.30 43.10,558.47 45.10,559.60 C47.10,560.73 48.97,561.53 51.10,562.10 C53.23,562.67 54.22,562.72 57.90,563.00 C61.58,563.28 69.52,563.23 73.20,563.80 C76.88,564.37 78.02,565.40 80.00,566.40 C81.98,567.40 83.40,569.10 85.10,569.80 C86.80,570.50 88.50,568.75 90.20,570.60 C91.90,572.45 93.32,577.35 95.30,580.90 C97.28,584.45 99.55,588.08 102.10,591.90 C104.65,595.72 107.77,600.53 110.60,603.80 C113.43,607.07 115.40,608.65 119.10,611.50 C122.80,614.35 129.95,619.00 132.80,620.90 C135.65,622.80 133.65,621.97 136.20,622.90 C138.75,623.83 144.97,625.42 148.10,626.50 C151.23,627.58 152.43,628.72 155.00,629.40 C157.57,630.08 159.82,630.60 163.50,630.60 C167.18,630.60 172.85,630.03 177.10,629.40 C181.35,628.77 184.73,627.93 189.00,626.80 C193.27,625.67 198.72,624.17 202.70,622.60 C206.68,621.03 209.50,618.83 212.90,617.40 C216.30,615.97 220.27,614.65 223.10,614.00 C225.93,613.35 227.07,613.35 229.90,613.50 C232.73,613.65 236.70,614.53 240.10,614.90 C243.50,615.27 246.90,615.57 250.30,615.70 C253.70,615.83 256.53,616.03 260.50,615.70 C264.47,615.37 268.98,614.32 274.10,613.70 C279.22,613.08 286.65,612.52 291.20,612.00 C295.75,611.48 299.00,610.92 301.40,610.60 C303.80,610.28 304.18,609.82 305.60,610.10 C307.02,610.38 308.03,611.80 309.90,612.30 C311.77,612.80 313.95,612.40 316.80,613.10 C319.65,613.80 322.47,615.70 327.00,616.50 C331.53,617.30 339.17,617.62 344.00,617.90 C348.83,618.18 352.30,617.67 356.00,618.20 C359.70,618.73 362.52,620.33 366.20,621.10 C369.88,621.87 374.42,622.63 378.10,622.80 C381.78,622.97 384.90,622.50 388.30,622.10 C391.70,621.70 394.53,620.77 398.50,620.40 C402.47,620.03 407.57,620.13 412.10,619.90 C416.63,619.67 421.15,619.20 425.70,619.00 C430.25,618.80 435.13,619.03 439.40,618.70 C443.67,618.37 447.03,617.23 451.30,617.00 C455.57,616.77 460.73,617.38 465.00,617.30 C469.27,617.22 472.65,616.43 476.90,616.50 C481.15,616.57 485.38,617.33 490.50,617.70 C495.62,618.07 502.48,618.48 507.60,618.70 C512.72,618.92 516.38,619.13 521.20,619.00 C526.02,618.87 532.53,618.32 536.50,617.90 C540.47,617.48 539.90,616.93 545.00,616.50 C550.10,616.07 561.15,616.07 567.10,615.30 C573.05,614.53 575.87,613.12 580.70,611.90 C585.53,610.68 591.27,608.85 596.10,608.00 C600.93,607.15 604.88,607.08 609.70,606.80 C614.52,606.52 619.88,606.53 625.00,606.30 C630.12,606.07 635.57,605.60 640.40,605.40 C645.23,605.20 649.45,605.38 654.00,605.10 C658.55,604.82 663.72,604.27 667.70,603.70 C671.68,603.13 673.93,602.18 677.90,601.70 C681.87,601.22 686.97,601.17 691.50,600.80 C696.03,600.43 700.00,600.08 705.10,599.50 C710.20,598.92 716.43,597.87 722.10,597.30 C727.77,596.73 735.40,596.22 739.10,596.10 C742.80,595.98 742.02,596.27 744.30,596.60 C746.58,596.93 749.40,597.62 752.80,598.10 C756.20,598.58 761.00,599.13 764.70,599.50 C768.40,599.87 771.07,599.95 775.00,600.30 C778.93,600.65 783.87,600.93 788.30,601.60 C792.73,602.27 797.17,603.57 801.60,604.30 C806.03,605.03 810.47,605.78 814.90,606.00 C819.33,606.22 823.77,605.82 828.20,605.60 C832.63,605.38 837.07,605.10 841.50,604.70 C845.93,604.30 850.37,603.60 854.80,603.20 C859.23,602.80 863.67,602.52 868.10,602.30 C872.53,602.08 876.75,602.02 881.40,601.90 C886.05,601.78 893.57,601.65 896.00,601.60" fill="none" stroke="#0000ff" stroke-width="1.05" shape-rendering="geometricPrecision"/>
<rect x="3" y="672" width="8" height="8" fill="#000"/>
<rect x="4" y="673" width="6" height="6" fill="#880088"/>
<text x="14" y="680" text-anchor="start" fill="#000" style="color:#000" textLength="78.91" lengthAdjust="spacing">RSI (14): 51,318</text>
<rect x="28" y="685" width="1" height="120" fill="#dddddd"/>
<rect x="50" y="685" width="1" height="120" fill="#dddddd"/>
<rect x="73" y="685" width="1" height="120" fill="#dddddd"/>
<rect x="101" y="685" width="1" height="120" fill="#dddddd"/>
<rect x="124" y="685" width="1" height="120" fill="#dddddd"/>
<rect x="147" y="685" width="1" height="120" fill="#dddddd"/>
<rect x="175" y="685" width="1" height="120" fill="#dddddd"/>
<rect x="198" y="685" width="1" height="120" fill="#dddddd"/>
<rect x="226" y="685" width="1" height="120" fill="#dddddd"/>
<rect x="249" y="685" width="1" height="120" fill="#dddddd"/>
<rect x="271" y="685" width="1" height="120" fill="#dddddd"/>
<rect x="300" y="685" width="1" height="120" fill="#dddddd"/>
<rect x="322" y="685" width="1" height="120" fill="#dddddd"/>
<rect x="345" y="685" width="1" height="120" fill="#dddddd"/>
<rect x="368" y="685" width="1" height="120" fill="#dddddd"/>
<rect x="396" y="685" width="1" height="120" fill="#dddddd"/>
<rect x="419" y="685" width="1" height="120" fill="#dddddd"/>
<rect x="447" y="685" width="1" height="120" fill="#dddddd"/>
<rect x="470" y="685" width="1" height="120" fill="#dddddd"/>
<rect x="493" y="685" width="1" height="120" fill="#dddddd"/>
<rect x="521" y="685" width="1" height="120" fill="#dddddd"/>
<rect x="544" y="685" width="1" height="120" fill="#dddddd"/>
<rect x="566" y="685" width="1" height="120" fill="#dddddd"/>
<rect x="595" y="685" width="1" height="120" fill="#dddddd"/>
<rect x="617" y="685" width="1" height="120" fill="#dddddd"/>
<rect x="640" y="685" width="1" height="120" fill="#dddddd"/>
<rect x="668" y="685" width="1" height="120" fill="#dddddd"/>
<rect x="691" y="685" width="1" height="120" fill="#dddddd"/>
<rect x="714" y="685" width="1" height="120" fill="#dddddd"/>
<rect x="742" y="685" width="1" height="120" fill="#dddddd"/>
<rect x="765" y="685" width="1" height="120" fill="#dddddd"/>
<rect x="787" y="685" width="1" height="120" fill="#dddddd"/>
<rect x="816" y="685" width="1" height="120" fill="#dddddd"/>
<rect x="838" y="685" width="1" height="120" fill="#dddddd"/>
<rect x="867" y="685" width="1" height="120" fill="#dddddd"/>
<rect x="889" y="685" width="1" height="120" fill="#dddddd"/>
<rect x="2" y="685" width="897" height="1" fill="#dddddd"/>
<text x="902" y="689" text-anchor="start" fill="#000" style="color:#000">100</text>
<rect x="2" y="709" width="897" height="1" fill="#dddddd"/>
<text x="902" y="713" text-anchor="start" fill="#000" style="color:#000">80</text>
<rect x="2" y="733" width="897" height="1" fill="#dddddd"/>
<text x="902" y="737" text-anchor="start" fill="#000" style="color:#000">60</text>
<rect x="2" y="756" width="897" height="1" fill="#dddddd"/>
<text x="902" y="760" text-anchor="start" fill="#000" style="color:#000">40</text>
<rect x="2" y="780" width="897" height="1" fill="#dddddd"/>
<text x="902" y="784" text-anchor="start" fill="#000" style="color:#000">20</text>
<rect x="2" y="804" width="897" height="1" fill="#dddddd"/>
<text x="902" y="808" text-anchor="start" fill="#000" style="color:#000">0</text>
<rect x="2" y="685" width="897" height="1" fill="#dddddd"/>
<rect x="2" y="804" width="897" height="1" fill="#dddddd"/>
<rect x="2" y="685" width="1" height="120" fill="#dddddd"/>
<rect x="898" y="685" width="1" height="120" fill="#dddddd"/>
<defs><clipPath id="above70"><rect x="0" y="0" width="940" height="721.2"/></clipPath><clipPath id="below30"><rect x="0" y="768.8" width="940" height="100"/></clipPath></defs>
<polygon points="5.5,721.2 5.5,698.4 11.5,696.7 16.5,697.0 22.5,711.5 28.5,718.3 33.5,716.6 39.5,716.3 45.5,732.4 50.5,729.4 56.5,724.6 62.5,722.2 67.5,721.7 73.5,720.9 79.5,729.0 84.5,737.5 90.5,729.4 96.5,760.0 101.5,761.4 107.5,761.4 113.5,762.6 118.5,760.5 124.5,761.4 130.5,763.5 135.5,765.6 141.5,762.6 147.5,763.4 152.5,765.0 158.5,767.5 164.5,764.6 169.5,761.5 175.5,762.0 181.5,762.3 186.5,761.1 192.5,755.5 198.5,758.4 203.5,753.8 209.5,747.0 215.5,746.7 220.5,746.5 226.5,751.3 232.5,756.0 237.5,760.3 243.5,761.5 249.5,760.6 254.5,757.2 260.5,760.3 266.5,754.3 271.5,755.5 277.5,754.8 283.5,754.3 288.5,757.7 294.5,759.3 300.5,751.6 305.5,750.1 311.5,766.2 317.5,761.8 322.5,767.8 328.5,769.5 334.5,762.3 339.5,764.4 345.5,764.6 351.5,763.7 356.5,767.1 362.5,771.7 368.5,773.4 373.5,776.0 379.5,770.9 385.5,768.8 390.5,764.0 396.5,762.3 402.5,765.7 407.5,769.1 413.5,761.0 419.5,765.7 424.5,762.3 430.5,767.4 436.5,763.2 441.5,767.1 447.5,757.2 453.5,757.7 459.5,762.0 464.5,765.2 470.5,765.7 476.5,759.4 481.5,764.0 487.5,767.4 493.5,766.6 498.5,766.1 504.5,771.2 510.5,770.0 515.5,769.5 521.5,771.2 527.5,764.0 532.5,766.3 538.5,765.2 544.5,758.1 549.5,763.2 555.5,763.7 561.5,766.1 566.5,762.9 572.5,756.0 578.5,753.0 583.5,748.2 589.5,746.7 595.5,746.5 600.5,752.1 606.5,751.3 612.5,753.3 617.5,749.6 623.5,755.3 629.5,753.3 634.5,753.8 640.5,750.2 646.5,752.8 651.5,755.0 657.5,752.1 663.5,748.7 668.5,745.6 674.5,737.5 680.5,735.4 685.5,742.2 691.5,738.3 697.5,736.3 702.5,731.2 708.5,734.9 714.5,732.4 719.5,730.7 725.5,725.2 731.5,728.6 736.5,726.9 742.5,732.5 748.5,745.6 753.5,753.3 759.5,753.3 765.5,749.9 770.5,752.4 776.5,754.5 782.5,758.5 787.5,758.2 793.5,760.7 799.5,763.7 804.5,765.5 810.5,770.2 816.5,762.3 821.5,760.7 827.5,753.8 833.5,752.7 838.5,751.6 844.5,751.0 850.5,745.5 855.5,741.6 861.5,743.3 867.5,744.4 872.5,749.9 878.5,748.2 884.5,746.4 889.5,745.7 895.5,743.3 895.5,721.2" fill="#ff6666" clip-path="url(#above70)" shape-rendering="geometricPrecision"/>
<polygon points="5.5,768.8 5.5,698.4 11.5,696.7 16.5,697.0 22.5,711.5 28.5,718.3 33.5,716.6 39.5,716.3 45.5,732.4 50.5,729.4 56.5,724.6 62.5,722.2 67.5,721.7 73.5,720.9 79.5,729.0 84.5,737.5 90.5,729.4 96.5,760.0 101.5,761.4 107.5,761.4 113.5,762.6 118.5,760.5 124.5,761.4 130.5,763.5 135.5,765.6 141.5,762.6 147.5,763.4 152.5,765.0 158.5,767.5 164.5,764.6 169.5,761.5 175.5,762.0 181.5,762.3 186.5,761.1 192.5,755.5 198.5,758.4 203.5,753.8 209.5,747.0 215.5,746.7 220.5,746.5 226.5,751.3 232.5,756.0 237.5,760.3 243.5,761.5 249.5,760.6 254.5,757.2 260.5,760.3 266.5,754.3 271.5,755.5 277.5,754.8 283.5,754.3 288.5,757.7 294.5,759.3 300.5,751.6 305.5,750.1 311.5,766.2 317.5,761.8 322.5,767.8 328.5,769.5 334.5,762.3 339.5,764.4 345.5,764.6 351.5,763.7 356.5,767.1 362.5,771.7 368.5,773.4 373.5,776.0 379.5,770.9 385.5,768.8 390.5,764.0 396.5,762.3 402.5,765.7 407.5,769.1 413.5,761.0 419.5,765.7 424.5,762.3 430.5,767.4 436.5,763.2 441.5,767.1 447.5,757.2 453.5,757.7 459.5,762.0 464.5,765.2 470.5,765.7 476.5,759.4 481.5,764.0 487.5,767.4 493.5,766.6 498.5,766.1 504.5,771.2 510.5,770.0 515.5,769.5 521.5,771.2 527.5,764.0 532.5,766.3 538.5,765.2 544.5,758.1 549.5,763.2 555.5,763.7 561.5,766.1 566.5,762.9 572.5,756.0 578.5,753.0 583.5,748.2 589.5,746.7 595.5,746.5 600.5,752.1 606.5,751.3 612.5,753.3 617.5,749.6 623.5,755.3 629.5,753.3 634.5,753.8 640.5,750.2 646.5,752.8 651.5,755.0 657.5,752.1 663.5,748.7 668.5,745.6 674.5,737.5 680.5,735.4 685.5,742.2 691.5,738.3 697.5,736.3 702.5,731.2 708.5,734.9 714.5,732.4 719.5,730.7 725.5,725.2 731.5,728.6 736.5,726.9 742.5,732.5 748.5,745.6 753.5,753.3 759.5,753.3 765.5,749.9 770.5,752.4 776.5,754.5 782.5,758.5 787.5,758.2 793.5,760.7 799.5,763.7 804.5,765.5 810.5,770.2 816.5,762.3 821.5,760.7 827.5,753.8 833.5,752.7 838.5,751.6 844.5,751.0 850.5,745.5 855.5,741.6 861.5,743.3 867.5,744.4 872.5,749.9 878.5,748.2 884.5,746.4 889.5,745.7 895.5,743.3 895.5,768.8" fill="#6666ff" clip-path="url(#below30)" shape-rendering="geometricPrecision"/>
<rect x="3" y="721" width="895" height="1" fill="#ff6666"/>
<text x="902" y="725" text-anchor="start" fill="#ff5555" style="color:#ff5555">70</text>
<rect x="3" y="768" width="895" height="1" fill="#6666ff"/>
<text x="902" y="772" text-anchor="start" fill="#6666ff" style="color:#6666ff">30</text>
<polyline points="5.5,698.4 11.5,696.7 16.5,697.0 22.5,711.5 28.5,718.3 33.5,716.6 39.5,716.3 45.5,732.4 50.5,729.4 56.5,724.6 62.5,722.2 67.5,721.7 73.5,720.9 79.5,729.0 84.5,737.5 90.5,729.4 96.5,760.0 101.5,761.4 107.5,761.4 113.5,762.6 118.5,760.5 124.5,761.4 130.5,763.5 135.5,765.6 141.5,762.6 147.5,763.4 152.5,765.0 158.5,767.5 164.5,764.6 169.5,761.5 175.5,762.0 181.5,762.3 186.5,761.1 192.5,755.5 198.5,758.4 203.5,753.8 209.5,747.0 215.5,746.7 220.5,746.5 226.5,751.3 232.5,756.0 237.5,760.3 243.5,761.5 249.5,760.6 254.5,757.2 260.5,760.3 266.5,754.3 271.5,755.5 277.5,754.8 283.5,754.3 288.5,757.7 294.5,759.3 300.5,751.6 305.5,750.1 311.5,766.2 317.5,761.8 322.5,767.8 328.5,769.5 334.5,762.3 339.5,764.4 345.5,764.6 351.5,763.7 356.5,767.1 362.5,771.7 368.5,773.4 373.5,776.0 379.5,770.9 385.5,768.8 390.5,764.0 396.5,762.3 402.5,765.7 407.5,769.1 413.5,761.0 419.5,765.7 424.5,762.3 430.5,767.4 436.5,763.2 441.5,767.1 447.5,757.2 453.5,757.7 459.5,762.0 464.5,765.2 470.5,765.7 476.5,759.4 481.5,764.0 487.5,767.4 493.5,766.6 498.5,766.1 504.5,771.2 510.5,770.0 515.5,769.5 521.5,771.2 527.5,764.0 532.5,766.3 538.5,765.2 544.5,758.1 549.5,763.2 555.5,763.7 561.5,766.1 566.5,762.9 572.5,756.0 578.5,753.0 583.5,748.2 589.5,746.7 595.5,746.5 600.5,752.1 606.5,751.3 612.5,753.3 617.5,749.6 623.5,755.3 629.5,753.3 634.5,753.8 640.5,750.2 646.5,752.8 651.5,755.0 657.5,752.1 663.5,748.7 668.5,745.6 674.5,737.5 680.5,735.4 685.5,742.2 691.5,738.3 697.5,736.3 702.5,731.2 708.5,734.9 714.5,732.4 719.5,730.7 725.5,725.2 731.5,728.6 736.5,726.9 742.5,732.5 748.5,745.6 753.5,753.3 759.5,753.3 765.5,749.9 770.5,752.4 776.5,754.5 782.5,758.5 787.5,758.2 793.5,760.7 799.5,763.7 804.5,765.5 810.5,770.2 816.5,762.3 821.5,760.7 827.5,753.8 833.5,752.7 838.5,751.6 844.5,751.0 850.5,745.5 855.5,741.6 861.5,743.3 867.5,744.4 872.5,749.9 878.5,748.2 884.5,746.4 889.5,745.7 895.5,743.3" fill="none" stroke="#800080" stroke-width="1.15" stroke-linejoin="round" shape-rendering="geometricPrecision"/>
</svg></body></html>
